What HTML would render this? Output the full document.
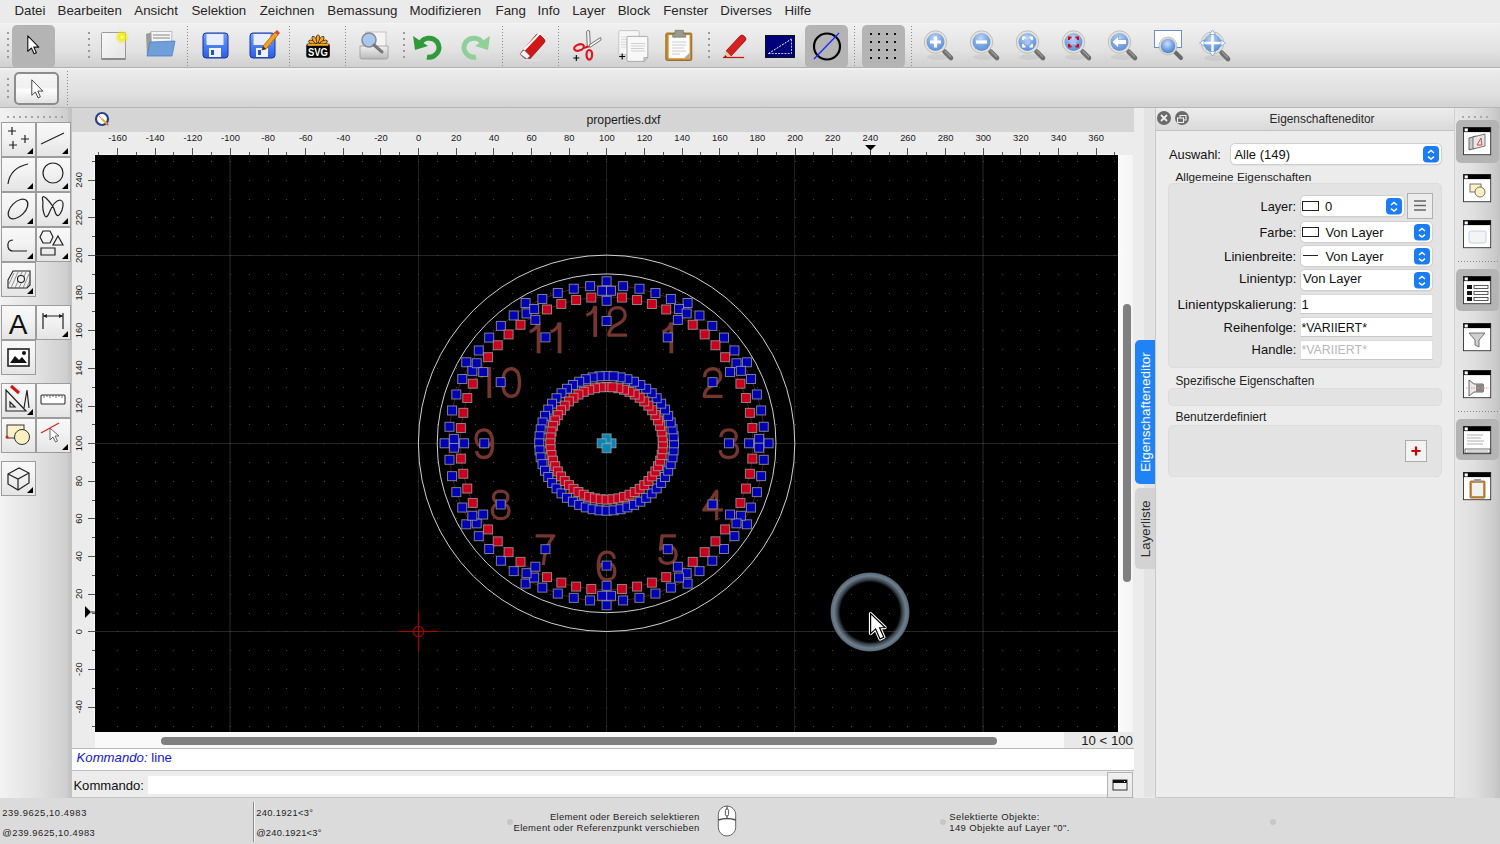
<!DOCTYPE html><html><head><meta charset="utf-8"><style>
*{margin:0;padding:0;box-sizing:border-box}
html,body{width:1500px;height:844px;overflow:hidden;background:#ececec;font-family:"Liberation Sans",sans-serif;color:#222;position:relative}
.a{position:absolute}
.t{position:absolute;white-space:nowrap}
svg{position:absolute;overflow:visible}
text{font-family:"Liberation Sans",sans-serif;white-space:pre}
</style></head><body><div class="a" style="left:0;top:0;width:1500px;height:23px;background:#ebebeb"></div><svg class="a" style="left:0;top:0" width="1500" height="844"><text x="14.40" y="15.00" font-size="13.30" fill="#262626" letter-spacing="0.000" >Datei</text></svg><svg class="a" style="left:0;top:0" width="1500" height="844"><text x="57.60" y="15.00" font-size="13.30" fill="#262626" letter-spacing="0.000" >Bearbeiten</text></svg><svg class="a" style="left:0;top:0" width="1500" height="844"><text x="134.30" y="15.00" font-size="13.30" fill="#262626" letter-spacing="0.000" >Ansicht</text></svg><svg class="a" style="left:0;top:0" width="1500" height="844"><text x="191.50" y="15.00" font-size="13.30" fill="#262626" letter-spacing="0.000" >Selektion</text></svg><svg class="a" style="left:0;top:0" width="1500" height="844"><text x="259.70" y="15.00" font-size="13.30" fill="#262626" letter-spacing="0.000" >Zeichnen</text></svg><svg class="a" style="left:0;top:0" width="1500" height="844"><text x="327.30" y="15.00" font-size="13.30" fill="#262626" letter-spacing="0.000" >Bemassung</text></svg><svg class="a" style="left:0;top:0" width="1500" height="844"><text x="409.40" y="15.00" font-size="13.30" fill="#262626" letter-spacing="0.000" >Modifizieren</text></svg><svg class="a" style="left:0;top:0" width="1500" height="844"><text x="495.60" y="15.00" font-size="13.30" fill="#262626" letter-spacing="0.000" >Fang</text></svg><svg class="a" style="left:0;top:0" width="1500" height="844"><text x="537.60" y="15.00" font-size="13.30" fill="#262626" letter-spacing="0.000" >Info</text></svg><svg class="a" style="left:0;top:0" width="1500" height="844"><text x="572.20" y="15.00" font-size="13.30" fill="#262626" letter-spacing="0.000" >Layer</text></svg><svg class="a" style="left:0;top:0" width="1500" height="844"><text x="617.70" y="15.00" font-size="13.30" fill="#262626" letter-spacing="0.000" >Block</text></svg><svg class="a" style="left:0;top:0" width="1500" height="844"><text x="663.20" y="15.00" font-size="13.30" fill="#262626" letter-spacing="0.000" >Fenster</text></svg><svg class="a" style="left:0;top:0" width="1500" height="844"><text x="720.30" y="15.00" font-size="13.30" fill="#262626" letter-spacing="0.000" >Diverses</text></svg><svg class="a" style="left:0;top:0" width="1500" height="844"><text x="784.50" y="15.00" font-size="13.30" fill="#262626" letter-spacing="0.000" >Hilfe</text></svg><div class="a" style="left:0;top:23px;width:1500px;height:1px;background:#f4f4f4"></div><div class="a" style="left:0;top:24px;width:1500px;height:44px;background:linear-gradient(#f0f0f0,#e2e2e2 60%,#d0d0d0);border-bottom:1px solid #b0b0b0"></div><div class="a" style="left:0;top:68px;width:1500px;height:40px;background:linear-gradient(#f4f4f4,#eaeaea 8%,#dedede 70%,#d2d2d2);border-bottom:1px solid #b6b6b6"></div><svg class="a" style="left:7px;top:32px" width="2" height="30" viewBox="0 0 2 30" ><rect x="0" y="0" width="2" height="2" fill="#9a9a9a"/><rect x="0" y="6" width="2" height="2" fill="#9a9a9a"/><rect x="0" y="12" width="2" height="2" fill="#9a9a9a"/><rect x="0" y="18" width="2" height="2" fill="#9a9a9a"/><rect x="0" y="24" width="2" height="2" fill="#9a9a9a"/></svg><svg class="a" style="left:88px;top:32px" width="2" height="30" viewBox="0 0 2 30" ><rect x="0" y="0" width="2" height="2" fill="#9a9a9a"/><rect x="0" y="6" width="2" height="2" fill="#9a9a9a"/><rect x="0" y="12" width="2" height="2" fill="#9a9a9a"/><rect x="0" y="18" width="2" height="2" fill="#9a9a9a"/><rect x="0" y="24" width="2" height="2" fill="#9a9a9a"/></svg><svg class="a" style="left:403px;top:32px" width="2" height="30" viewBox="0 0 2 30" ><rect x="0" y="0" width="2" height="2" fill="#9a9a9a"/><rect x="0" y="6" width="2" height="2" fill="#9a9a9a"/><rect x="0" y="12" width="2" height="2" fill="#9a9a9a"/><rect x="0" y="18" width="2" height="2" fill="#9a9a9a"/><rect x="0" y="24" width="2" height="2" fill="#9a9a9a"/></svg><svg class="a" style="left:708px;top:32px" width="2" height="30" viewBox="0 0 2 30" ><rect x="0" y="0" width="2" height="2" fill="#9a9a9a"/><rect x="0" y="6" width="2" height="2" fill="#9a9a9a"/><rect x="0" y="12" width="2" height="2" fill="#9a9a9a"/><rect x="0" y="18" width="2" height="2" fill="#9a9a9a"/><rect x="0" y="24" width="2" height="2" fill="#9a9a9a"/></svg><div class="a" style="left:187px;top:26px;width:1px;height:41px;background:repeating-linear-gradient(#8a8a8a 0 1px,transparent 1px 3px)"></div><div class="a" style="left:289px;top:26px;width:1px;height:41px;background:repeating-linear-gradient(#8a8a8a 0 1px,transparent 1px 3px)"></div><div class="a" style="left:345px;top:26px;width:1px;height:41px;background:repeating-linear-gradient(#8a8a8a 0 1px,transparent 1px 3px)"></div><div class="a" style="left:502px;top:26px;width:1px;height:41px;background:repeating-linear-gradient(#8a8a8a 0 1px,transparent 1px 3px)"></div><div class="a" style="left:558px;top:26px;width:1px;height:41px;background:repeating-linear-gradient(#8a8a8a 0 1px,transparent 1px 3px)"></div><div class="a" style="left:854px;top:26px;width:1px;height:41px;background:repeating-linear-gradient(#8a8a8a 0 1px,transparent 1px 3px)"></div><div class="a" style="left:911px;top:26px;width:1px;height:41px;background:repeating-linear-gradient(#8a8a8a 0 1px,transparent 1px 3px)"></div><div class="a" style="left:12px;top:25px;width:43px;height:43px;background:#b4b4b4;border-radius:5px"></div><svg class="a" style="left:27px;top:35px" width="14" height="20" viewBox="0 0 14 20" ><path d="M0 0 L0 15.5 L3.6 12.2 L6.3 18 L8.6 17 L6 11.3 L11 11.3 Z" transform="translate(0.8,0.8)" fill="#fff" stroke="#111" stroke-width="1.1" stroke-linejoin="round"/></svg><svg class="a" style="left:99px;top:29px" width="32" height="34" viewBox="0 0 32 34" >
<defs><radialGradient id="glow"><stop offset="0" stop-color="#fffbe0"/><stop offset="0.35" stop-color="#f4f000"/><stop offset="1" stop-color="#f0e000" stop-opacity="0"/></radialGradient>
<linearGradient id="pg" x1="0" y1="0" x2="1" y2="1"><stop offset="0" stop-color="#f8f8f8"/><stop offset="1" stop-color="#e4e4e4"/></linearGradient></defs>
<rect x="2.5" y="3.5" width="24" height="27" rx="1" fill="url(#pg)" stroke="#9a9a9a"/>
<rect x="2.5" y="29" width="24" height="2" fill="#8a8a8a"/>
<circle cx="23" cy="8" r="7" fill="url(#glow)"/></svg><svg class="a" style="left:143px;top:30px" width="34" height="30" viewBox="0 0 34 30" >
<path d="M3 4 L9 2 L10 25 L4 26 Z" fill="#9a9a9a"/>
<path d="M8 1.5 L29 1.5 L28 22 L9 22 Z" fill="#f6f6f6" stroke="#b0b0b0" stroke-width="0.8"/>
<path d="M10 5 L27 5 M10 8 L27 8" stroke="#aaa" stroke-width="1.5"/>
<path d="M7 12 L32 11 L29 26 L4 26 Z" fill="#6f9fd8" stroke="#4c7fc0" stroke-width="0.8"/></svg><svg class="a" style="left:202px;top:32px" width="27" height="27" viewBox="0 0 27 27" >
<defs><linearGradient id="fl" x1="0" y1="0" x2="0" y2="1"><stop offset="0" stop-color="#6ea0ff"/><stop offset="1" stop-color="#2a5fe0"/></linearGradient></defs>
<rect x="1" y="1" width="25" height="25" rx="3" fill="url(#fl)" stroke="#1a2fa0" stroke-width="1"/>
<rect x="4.5" y="2" width="17" height="11" fill="#e8eefc"/>
<rect x="7" y="16" width="12" height="9" fill="#eef2ff"/>
<rect x="9" y="18" width="3" height="5" fill="#2a4fc0"/></svg><svg class="a" style="left:249px;top:32px" width="27" height="27" viewBox="0 0 27 27" >
<defs><linearGradient id="fl" x1="0" y1="0" x2="0" y2="1"><stop offset="0" stop-color="#6ea0ff"/><stop offset="1" stop-color="#2a5fe0"/></linearGradient></defs>
<rect x="1" y="1" width="25" height="25" rx="3" fill="url(#fl)" stroke="#1a2fa0" stroke-width="1"/>
<rect x="4.5" y="2" width="17" height="11" fill="#e8eefc"/>
<rect x="7" y="16" width="12" height="9" fill="#eef2ff"/>
<rect x="9" y="18" width="3" height="5" fill="#2a4fc0"/></svg><svg class="a" style="left:260px;top:29px" width="20" height="22" viewBox="0 0 20 22" ><path d="M3 17 L15 3 L18 6 L6 20 L2 21 Z" fill="#f4a020" stroke="#b05a00" stroke-width="0.8"/><path d="M15 3 L17 1 L20 4 L18 6 Z" fill="#e04040"/><path d="M2 21 L3 17 L6 20 Z" fill="#333"/></svg><svg class="a" style="left:303px;top:30px" width="31" height="31" viewBox="303 30 31 31"><ellipse cx="318" cy="39" rx="1.9" ry="4.2" transform="rotate(-66 318 45)" fill="#f7a823" stroke="#000" stroke-width="0.6"/><ellipse cx="318" cy="39" rx="1.9" ry="4.2" transform="rotate(-33 318 45)" fill="#f7a823" stroke="#000" stroke-width="0.6"/><ellipse cx="318" cy="39" rx="1.9" ry="4.2" transform="rotate(0 318 45)" fill="#f7a823" stroke="#000" stroke-width="0.6"/><ellipse cx="318" cy="39" rx="1.9" ry="4.2" transform="rotate(33 318 45)" fill="#f7a823" stroke="#000" stroke-width="0.6"/><ellipse cx="318" cy="39" rx="1.9" ry="4.2" transform="rotate(66 318 45)" fill="#f7a823" stroke="#000" stroke-width="0.6"/><rect x="306.3" y="43.6" width="23.5" height="14.2" rx="2.2" fill="#000"/>
<rect x="307.5" y="43.8" width="21" height="2" fill="#f7a823"/>
<text x="318" y="56" font-family="Liberation Sans" font-weight="bold" font-size="11" fill="#fff" text-anchor="middle" transform="translate(318 0) scale(0.86 1) translate(-318 0)">SVG</text></svg><svg class="a" style="left:358px;top:30px" width="32" height="32" viewBox="0 0 32 32" >
<defs><linearGradient id="pr" x1="0" y1="0" x2="0" y2="1"><stop offset="0" stop-color="#f2f2f2"/><stop offset="1" stop-color="#b8b8b8"/></linearGradient></defs>
<rect x="8" y="2" width="20" height="16" fill="#f4f4f4" stroke="#bbb" stroke-width="0.8"/>
<path d="M2 16 L30 16 L30 27 Q30 29 28 29 L4 29 Q2 29 2 27 Z" fill="url(#pr)" stroke="#9a9a9a" stroke-width="0.8"/>
<circle cx="11" cy="10" r="7" fill="#a9c8f0" stroke="#8a8a8a" stroke-width="1.5"/>
<path d="M16 15 L24 22" stroke="#777" stroke-width="3" stroke-linecap="round"/></svg><svg class="a" style="left:413px;top:32px" width="30" height="27" viewBox="0 0 30 27" ><g ><path d="M8 10 A10 9.5 0 1 1 14 25" fill="none" stroke="#2f9a3a" stroke-width="5"/>
<path d="M0 4 L2 18 L15 14 Z" fill="#2f9a3a"/></g></svg><svg class="a" style="left:460px;top:32px" width="30" height="27" viewBox="0 0 30 27" ><g transform="translate(30,0) scale(-1,1)"><path d="M8 10 A10 9.5 0 1 1 14 25" fill="none" stroke="#8fcf9a" stroke-width="5"/>
<path d="M0 4 L2 18 L15 14 Z" fill="#8fcf9a"/></g></svg><svg class="a" style="left:516px;top:30px" width="32" height="32" viewBox="0 0 32 32" ><path d="M4 24 L20 5 Q22 3 24 5 L28 9 Q30 11 28 13 L12 31 Z" fill="#d01818" stroke="#8a1010" stroke-width="0.8"/>
<path d="M8 20 L24 3" stroke="#fff" stroke-width="2"/>
<path d="M4 24 L8 20 L14 26 L11 29 Z" fill="#f4f4f4" stroke="#888" stroke-width="0.8"/>
<ellipse cx="16" cy="30" rx="10" ry="1.3" fill="#ddd"/></svg><svg class="a" style="left:570px;top:28px" width="36" height="36" viewBox="570 28 36 36"><path d="M586.6 31.5 Q588 29.5 589.6 31 L590.3 46 L587.3 47 Z" fill="#f4f4f4" stroke="#555" stroke-width="0.8"/>
<path d="M589 45 L600.5 37.5 Q601.5 39 600.8 40.2 L589.8 47.5 Z" fill="#f4f4f4" stroke="#555" stroke-width="0.8"/>
<ellipse cx="579" cy="47.5" rx="5" ry="3" transform="rotate(-20 579 47.5)" fill="none" stroke="#e0141e" stroke-width="2.2"/>
<ellipse cx="589.3" cy="54.8" rx="2.8" ry="4.8" fill="none" stroke="#e0141e" stroke-width="2.2"/>
<path d="M583.5 48 L588.5 46.5" stroke="#e0141e" stroke-width="2"/>
<path d="M576.3 55 V61 M573.3 58 H579.3" stroke="#000" stroke-width="1.1"/></svg><svg class="a" style="left:614px;top:28px" width="38" height="38" viewBox="614 28 38 38"><rect x="618.8" y="30.6" width="20.4" height="24" rx="1.2" fill="#f6f6f6" stroke="#bdbdbd" stroke-width="0.8"/>
<path d="M621 37 H630 M621 39.5 H630 M621 42 H630 M621 44.5 H630 M621 47 H630" stroke="#d4d4d4" stroke-width="0.8"/>
<path d="M627 37.4 Q627 36.4 628 36.4 L646.8 36.4 Q647.8 36.4 647.8 37.4 L647.8 57.5 L643.8 61.4 L628 61.4 Q627 61.4 627 60.4 Z" fill="#f8f8f8" stroke="#9a9a9a" stroke-width="0.8"/>
<path d="M643.8 61.4 L643.8 57.5 L647.8 57.5 Z" fill="#cfcfcf" stroke="#8a8a8a" stroke-width="0.5"/>
<path d="M631 43.5 H645 M631 46 H645 M631 48.5 H644 M631 51 H645" stroke="#cfcfcf" stroke-width="1"/>
<path d="M622.2 53.5 V59.5 M619.2 56.5 H625.2" stroke="#000" stroke-width="1.1"/></svg><svg class="a" style="left:662px;top:27px" width="34" height="36" viewBox="662 27 34 36"><rect x="665.8" y="33" width="26" height="27.5" rx="1.5" fill="#c6882a" stroke="#8a5a18" stroke-width="0.8"/>
<rect x="668.6" y="35" width="21" height="23.3" fill="#fbfbfb"/>
<path d="M672 42 H686 M672 45 H686 M672 48 H684 M672 51 H686 M672 54 H680" stroke="#c8c8c8" stroke-width="0.9"/>
<path d="M684 58.3 L689.6 52.7 L689.6 58.3 Z" fill="#a8a8a8"/>
<path d="M672.7 37.2 L672.7 33.5 L675 33.5 L675 30.3 L683.4 30.3 L683.4 33.5 L685.7 33.5 L685.7 37.2 Z" fill="#9a9a90" stroke="#6a6a60" stroke-width="0.6"/></svg><svg class="a" style="left:721px;top:33px" width="26" height="26" viewBox="0 0 26 26" ><path d="M5 18 L19 3 Q21 1 23 3 L24 4 Q26 6 24 8 L10 23 Z" fill="#d82020" stroke="#8a1010" stroke-width="0.8"/>
<path d="M5 18 L10 23 L3 25 Z" fill="#e8c898"/><path d="M3 25 L4 22 L6 24 Z" fill="#222"/>
<path d="M2 24.5 L23 24.5" stroke="#e00000" stroke-width="1.2"/></svg><svg class="a" style="left:765px;top:35px" width="30" height="23" viewBox="0 0 30 23" ><rect x="0.5" y="0.5" width="29" height="22" fill="#00007a" stroke="#111"/>
<path d="M3.5 18.5 L26.5 18.5 L26.5 4" fill="none" stroke="#bcc8ff" stroke-width="1" stroke-dasharray="2 1.2"/><path d="M3.5 18.5 L26.5 4" stroke="#fff" stroke-width="1" stroke-dasharray="2 1.2"/></svg><div class="a" style="left:805px;top:25px;width:43px;height:43px;background:#b4b4b4;border-radius:5px"></div><svg class="a" style="left:811px;top:31px" width="32" height="32" viewBox="0 0 32 32" ><circle cx="16" cy="15.5" r="13" fill="none" stroke="#000" stroke-width="2.2"/><path d="M3 28 L28 2" stroke="#1a2aff" stroke-width="1.3"/></svg><div class="a" style="left:862px;top:25px;width:43px;height:43px;background:#b4b4b4;border-radius:5px"></div><svg class="a" style="left:870px;top:33px" width="28" height="28" viewBox="0 0 28 28" ><rect x="0" y="0" width="2" height="2" fill="#111"/><rect x="0" y="8" width="2" height="2" fill="#111"/><rect x="0" y="16" width="2" height="2" fill="#111"/><rect x="0" y="24" width="2" height="2" fill="#111"/><rect x="8" y="0" width="2" height="2" fill="#111"/><rect x="8" y="8" width="2" height="2" fill="#111"/><rect x="8" y="16" width="2" height="2" fill="#111"/><rect x="8" y="24" width="2" height="2" fill="#111"/><rect x="16" y="0" width="2" height="2" fill="#111"/><rect x="16" y="8" width="2" height="2" fill="#111"/><rect x="16" y="16" width="2" height="2" fill="#111"/><rect x="16" y="24" width="2" height="2" fill="#111"/><rect x="24" y="0" width="2" height="2" fill="#111"/><rect x="24" y="8" width="2" height="2" fill="#111"/><rect x="24" y="16" width="2" height="2" fill="#111"/><rect x="24" y="24" width="2" height="2" fill="#111"/></svg><svg class="a" style="left:923px;top:30px" width="34" height="34" viewBox="0 0 34 34" ><defs><radialGradient id="mg923" cx="0.45" cy="0.3" r="0.75"><stop offset="0" stop-color="#c4d8f6"/><stop offset="0.55" stop-color="#7aa6e2"/><stop offset="1" stop-color="#5a8cd4"/></radialGradient></defs>
<ellipse cx="15" cy="27" rx="11" ry="3" fill="#000" opacity="0.06"/>
<path d="M21.5 21.5 L28 28" stroke="#6e6e6e" stroke-width="4.6" stroke-linecap="round"/><path d="M22 21 L27.5 26.5" stroke="#9a9a9a" stroke-width="1.2" stroke-linecap="round"/>
<circle cx="12.5" cy="12" r="11.2" fill="#e4e4dc" stroke="#b4b4aa" stroke-width="0.8"/>
<circle cx="12.5" cy="12" r="9" fill="url(#mg923)"/><path d="M12.5 6.5 L12.5 17.5 M7 12 L18 12" stroke="#fff" stroke-width="3.2"/></svg><svg class="a" style="left:969px;top:30px" width="34" height="34" viewBox="0 0 34 34" ><defs><radialGradient id="mg969" cx="0.45" cy="0.3" r="0.75"><stop offset="0" stop-color="#c4d8f6"/><stop offset="0.55" stop-color="#7aa6e2"/><stop offset="1" stop-color="#5a8cd4"/></radialGradient></defs>
<ellipse cx="15" cy="27" rx="11" ry="3" fill="#000" opacity="0.06"/>
<path d="M21.5 21.5 L28 28" stroke="#6e6e6e" stroke-width="4.6" stroke-linecap="round"/><path d="M22 21 L27.5 26.5" stroke="#9a9a9a" stroke-width="1.2" stroke-linecap="round"/>
<circle cx="12.5" cy="12" r="11.2" fill="#e4e4dc" stroke="#b4b4aa" stroke-width="0.8"/>
<circle cx="12.5" cy="12" r="9" fill="url(#mg969)"/><path d="M7 12 L18 12" stroke="#fff" stroke-width="3.2"/></svg><svg class="a" style="left:1015px;top:30px" width="34" height="34" viewBox="0 0 34 34" ><defs><radialGradient id="mg1015" cx="0.45" cy="0.3" r="0.75"><stop offset="0" stop-color="#c4d8f6"/><stop offset="0.55" stop-color="#7aa6e2"/><stop offset="1" stop-color="#5a8cd4"/></radialGradient></defs>
<ellipse cx="15" cy="27" rx="11" ry="3" fill="#000" opacity="0.06"/>
<path d="M21.5 21.5 L28 28" stroke="#6e6e6e" stroke-width="4.6" stroke-linecap="round"/><path d="M22 21 L27.5 26.5" stroke="#9a9a9a" stroke-width="1.2" stroke-linecap="round"/>
<circle cx="12.5" cy="12" r="11.2" fill="#e4e4dc" stroke="#b4b4aa" stroke-width="0.8"/>
<circle cx="12.5" cy="12" r="9" fill="url(#mg1015)"/><path d="M8 10 L8 7.5 L10.5 7.5 M14.5 7.5 L17 7.5 L17 10 M17 14 L17 16.5 L14.5 16.5 M10.5 16.5 L8 16.5 L8 14" fill="none" stroke="#fff" stroke-width="1.8"/><rect x="10" y="9.5" width="5" height="5" fill="#a8c4ee"/></svg><svg class="a" style="left:1061px;top:30px" width="34" height="34" viewBox="0 0 34 34" ><defs><radialGradient id="mg1061" cx="0.45" cy="0.3" r="0.75"><stop offset="0" stop-color="#c4d8f6"/><stop offset="0.55" stop-color="#7aa6e2"/><stop offset="1" stop-color="#5a8cd4"/></radialGradient></defs>
<ellipse cx="15" cy="27" rx="11" ry="3" fill="#000" opacity="0.06"/>
<path d="M21.5 21.5 L28 28" stroke="#6e6e6e" stroke-width="4.6" stroke-linecap="round"/><path d="M22 21 L27.5 26.5" stroke="#9a9a9a" stroke-width="1.2" stroke-linecap="round"/>
<circle cx="12.5" cy="12" r="11.2" fill="#e4e4dc" stroke="#b4b4aa" stroke-width="0.8"/>
<circle cx="12.5" cy="12" r="9" fill="url(#mg1061)"/><path d="M8 10 L8 7.5 L10.5 7.5 M14.5 7.5 L17 7.5 L17 10 M17 14 L17 16.5 L14.5 16.5 M10.5 16.5 L8 16.5 L8 14" fill="none" stroke="#e00010" stroke-width="2"/><rect x="10" y="9.5" width="5" height="5" fill="#a8c4ee"/></svg><svg class="a" style="left:1107px;top:30px" width="34" height="34" viewBox="0 0 34 34" ><defs><radialGradient id="mg1107" cx="0.45" cy="0.3" r="0.75"><stop offset="0" stop-color="#c4d8f6"/><stop offset="0.55" stop-color="#7aa6e2"/><stop offset="1" stop-color="#5a8cd4"/></radialGradient></defs>
<ellipse cx="15" cy="27" rx="11" ry="3" fill="#000" opacity="0.06"/>
<path d="M21.5 21.5 L28 28" stroke="#6e6e6e" stroke-width="4.6" stroke-linecap="round"/><path d="M22 21 L27.5 26.5" stroke="#9a9a9a" stroke-width="1.2" stroke-linecap="round"/>
<circle cx="12.5" cy="12" r="11.2" fill="#e4e4dc" stroke="#b4b4aa" stroke-width="0.8"/>
<circle cx="12.5" cy="12" r="9" fill="url(#mg1107)"/><path d="M5 12 L11.5 6 L11.5 9.5 L19.5 9.5 L19.5 14.5 L11.5 14.5 L11.5 18 Z" fill="#fff" stroke="#4a7ac8" stroke-width="0.5"/></svg><svg class="a" style="left:1153px;top:30px" width="32" height="32" viewBox="0 0 32 32" ><defs><radialGradient id="mgw" cx="0.45" cy="0.35" r="0.7"><stop offset="0" stop-color="#cfe0fb"/><stop offset="0.6" stop-color="#6f9ee0"/><stop offset="1" stop-color="#4a7cc8"/></radialGradient></defs>
<rect x="1.5" y="0.5" width="27" height="17" fill="#fff" stroke="#6a8fd0"/>
<path d="M22 22 L28 28" stroke="#6a6a6a" stroke-width="4" stroke-linecap="round"/>
<circle cx="15" cy="16" r="9" fill="#dcdcd4" stroke="#b8b8b0" stroke-width="0.8"/><circle cx="15" cy="16" r="7.3" fill="url(#mgw)"/></svg><svg class="a" style="left:1200px;top:31px" width="34" height="34" viewBox="0 0 34 34" ><defs><radialGradient id="mg1200" cx="0.45" cy="0.3" r="0.75"><stop offset="0" stop-color="#c4d8f6"/><stop offset="0.55" stop-color="#7aa6e2"/><stop offset="1" stop-color="#5a8cd4"/></radialGradient></defs>
<ellipse cx="15" cy="27" rx="11" ry="3" fill="#000" opacity="0.06"/>
<path d="M21.5 21.5 L28 28" stroke="#6e6e6e" stroke-width="4.6" stroke-linecap="round"/><path d="M22 21 L27.5 26.5" stroke="#9a9a9a" stroke-width="1.2" stroke-linecap="round"/>
<circle cx="12.5" cy="12" r="11.2" fill="#e4e4dc" stroke="#b4b4aa" stroke-width="0.8"/>
<circle cx="12.5" cy="12" r="9" fill="url(#mg1200)"/><path d="M12.5 0 L12.5 24 M0.5 12 L24.5 12" stroke="#fff" stroke-width="2.4"/><path d="M12.5 -1 L9.5 3.5 L15.5 3.5 Z M12.5 25 L9.5 20.5 L15.5 20.5 Z M-0.5 12 L4 9 L4 15 Z M25.5 12 L21 9 L21 15 Z" fill="#fff" stroke="#5a8ad8" stroke-width="0.6"/></svg><svg class="a" style="left:7px;top:78px" width="2" height="24" viewBox="0 0 2 24" ><rect x="0" y="0" width="2" height="2" fill="#9a9a9a"/><rect x="0" y="6" width="2" height="2" fill="#9a9a9a"/><rect x="0" y="12" width="2" height="2" fill="#9a9a9a"/><rect x="0" y="18" width="2" height="2" fill="#9a9a9a"/></svg><div class="a" style="left:67px;top:71px;width:1px;height:35px;background:repeating-linear-gradient(#8a8a8a 0 1px,transparent 1px 3px)"></div><div class="a" style="left:14px;top:72px;width:45px;height:33px;border:2px solid #8c8c8c;border-radius:5px;background:linear-gradient(#f6f6f6 0%,#f0f0f0 45%,#fdfdfd 55%,#e2e2e2 100%)"></div><svg class="a" style="left:31px;top:79px" width="14" height="20" viewBox="0 0 14 20" ><path d="M0 0 L0 15.5 L3.6 12.2 L6.3 18 L8.6 17 L6 11.3 L11 11.3 Z" transform="translate(0.8,0.8)" fill="#fff" stroke="#333" stroke-width="0.9" stroke-linejoin="round"/></svg><div class="a" style="left:0;top:108px;width:72px;height:690px;background:linear-gradient(90deg,#f2f2f2 0%,#e2e2e2 50%,#cfcfcf 92%,#bdbdbd 100%)"></div><div class="a" style="left:70px;top:108px;width:2px;height:690px;background:#c2c2c2"></div><svg class="a" style="left:7px;top:116px" width="60" height="2" viewBox="0 0 60 2" ><rect x="0" y="0" width="2" height="2" fill="#a4a4a4"/><rect x="6" y="0" width="2" height="2" fill="#a4a4a4"/><rect x="12" y="0" width="2" height="2" fill="#a4a4a4"/><rect x="18" y="0" width="2" height="2" fill="#a4a4a4"/><rect x="24" y="0" width="2" height="2" fill="#a4a4a4"/><rect x="30" y="0" width="2" height="2" fill="#a4a4a4"/><rect x="36" y="0" width="2" height="2" fill="#a4a4a4"/><rect x="42" y="0" width="2" height="2" fill="#a4a4a4"/><rect x="48" y="0" width="2" height="2" fill="#a4a4a4"/><rect x="54" y="0" width="2" height="2" fill="#a4a4a4"/></svg><div class="a" style="left:1px;top:122px;width:35px;height:35px;border:1px solid #9c9c9c;background:linear-gradient(#f8f8f8,#f2f2f2 45%,#e4e4e4)"></div><svg class="a" style="left:1px;top:122px" width="35" height="35" viewBox="0 0 35 35" ><path d="M11 5 L11 13 M7 9 L15 9 M24 13 L24 21 M20 17 L28 17 M12 19 L12 27 M8 23 L16 23" stroke="#222" fill="none" stroke-width="1.2"/><path d="M32 26 L32 32 L26 32 Z" fill="#000"/></svg><div class="a" style="left:36px;top:122px;width:35px;height:35px;border:1px solid #9c9c9c;background:linear-gradient(#f8f8f8,#f2f2f2 45%,#e4e4e4)"></div><svg class="a" style="left:36px;top:122px" width="35" height="35" viewBox="0 0 35 35" ><path d="M5 22 L28 11" stroke="#222" fill="none" stroke-width="1.2"/><path d="M32 26 L32 32 L26 32 Z" fill="#000"/></svg><div class="a" style="left:1px;top:157px;width:35px;height:35px;border:1px solid #9c9c9c;background:linear-gradient(#f8f8f8,#f2f2f2 45%,#e4e4e4)"></div><svg class="a" style="left:1px;top:157px" width="35" height="35" viewBox="0 0 35 35" ><path d="M7 27 Q9 11 27 7" stroke="#222" fill="none" stroke-width="1.2"/><path d="M32 26 L32 32 L26 32 Z" fill="#000"/></svg><div class="a" style="left:36px;top:157px;width:35px;height:35px;border:1px solid #9c9c9c;background:linear-gradient(#f8f8f8,#f2f2f2 45%,#e4e4e4)"></div><svg class="a" style="left:36px;top:157px" width="35" height="35" viewBox="0 0 35 35" ><circle cx="17" cy="16" r="10" stroke="#222" fill="none" stroke-width="1.2"/><path d="M32 26 L32 32 L26 32 Z" fill="#000"/></svg><div class="a" style="left:1px;top:192px;width:35px;height:35px;border:1px solid #9c9c9c;background:linear-gradient(#f8f8f8,#f2f2f2 45%,#e4e4e4)"></div><svg class="a" style="left:1px;top:192px" width="35" height="35" viewBox="0 0 35 35" ><ellipse cx="17" cy="17" rx="12" ry="7" transform="rotate(-45 17 17)" stroke="#222" fill="none" stroke-width="1.2"/><path d="M32 26 L32 32 L26 32 Z" fill="#000"/></svg><div class="a" style="left:36px;top:192px;width:35px;height:35px;border:1px solid #9c9c9c;background:linear-gradient(#f8f8f8,#f2f2f2 45%,#e4e4e4)"></div><svg class="a" style="left:36px;top:192px" width="35" height="35" viewBox="0 0 35 35" ><path d="M7 10 Q5 2 10 6 Q18 14 19 20 Q22 28 26 18 Q29 9 24 8 Q18 9 14 19 Q11 27 9 24 Q6 18 7 10" stroke="#222" fill="none" stroke-width="1.2"/><path d="M32 26 L32 32 L26 32 Z" fill="#000"/></svg><div class="a" style="left:1px;top:227px;width:35px;height:35px;border:1px solid #9c9c9c;background:linear-gradient(#f8f8f8,#f2f2f2 45%,#e4e4e4)"></div><svg class="a" style="left:1px;top:227px" width="35" height="35" viewBox="0 0 35 35" ><path d="M12 13 Q6 13 7 20 Q8 24 12 24 L26 24" stroke="#222" fill="none" stroke-width="1.2"/><path d="M32 26 L32 32 L26 32 Z" fill="#000"/></svg><div class="a" style="left:36px;top:227px;width:35px;height:35px;border:1px solid #9c9c9c;background:linear-gradient(#f8f8f8,#f2f2f2 45%,#e4e4e4)"></div><svg class="a" style="left:36px;top:227px" width="35" height="35" viewBox="0 0 35 35" ><path d="M7 4 L14 4 L17 10 L14 16 L7 16 L4 10 Z M22 9 L27 18 L17 18 Z M5 21 L19 21 L19 28 L5 28 Z" stroke="#222" fill="none" stroke-width="1.2"/><path d="M32 26 L32 32 L26 32 Z" fill="#000"/></svg><div class="a" style="left:1px;top:262px;width:35px;height:35px;border:1px solid #9c9c9c;background:linear-gradient(#f8f8f8,#f2f2f2 45%,#e4e4e4)"></div><svg class="a" style="left:1px;top:262px" width="35" height="35" viewBox="0 0 35 35" ><path d="M7 18 L12 9 L29 9 L29 23 L26 26 L7 26 Z" fill="#f0f0f0" stroke="#222" stroke-width="1.1"/><g stroke="#555" stroke-width="0.6"><path d="M8 22 L13 11 M10 26 L17 10 M14 26 L21 10 M18 26 L25 10 M22 26 L28 12 M26 25 L29 18"/></g><circle cx="20" cy="17" r="3.5" fill="#f0f0f0" stroke="#222" stroke-width="1.1"/><path d="M32 26 L32 32 L26 32 Z" fill="#000"/></svg><div class="a" style="left:1px;top:305px;width:35px;height:35px;border:1px solid #9c9c9c;background:linear-gradient(#f8f8f8,#f2f2f2 45%,#e4e4e4)"></div><svg class="a" style="left:1px;top:305px" width="35" height="35" viewBox="0 0 35 35" ><text x="17" y="29" font-family="Liberation Serif" font-size="28" text-anchor="middle" fill="#111">A</text></svg><div class="a" style="left:36px;top:305px;width:35px;height:35px;border:1px solid #9c9c9c;background:linear-gradient(#f8f8f8,#f2f2f2 45%,#e4e4e4)"></div><svg class="a" style="left:36px;top:305px" width="35" height="35" viewBox="0 0 35 35" ><path d="M7 8 L7 24 M27 8 L27 24 M7 11 L27 11" stroke="#222" fill="none" stroke-width="1.2"/><path d="M7 11 L11 9 L11 13 Z M27 11 L23 9 L23 13 Z" fill="#222"/><path d="M32 26 L32 32 L26 32 Z" fill="#000"/></svg><div class="a" style="left:1px;top:340px;width:35px;height:35px;border:1px solid #9c9c9c;background:linear-gradient(#f8f8f8,#f2f2f2 45%,#e4e4e4)"></div><svg class="a" style="left:1px;top:340px" width="35" height="35" viewBox="0 0 35 35" ><rect x="7" y="9" width="21" height="17" fill="#fff" stroke="#222" stroke-width="1.6"/><path d="M9 23 L14 16 L18 20 L21 17 L26 23 Z" fill="#111"/><circle cx="23" cy="13" r="2" fill="#111"/></svg><div class="a" style="left:1px;top:383px;width:35px;height:35px;border:1px solid #9c9c9c;background:linear-gradient(#f8f8f8,#f2f2f2 45%,#e4e4e4)"></div><svg class="a" style="left:1px;top:383px" width="35" height="35" viewBox="0 0 35 35" ><path d="M5 7 L5 28 L25 28 Z M9 19 L9 24 L14 24 Z" stroke="#222" fill="none" stroke-width="1.2"/><path d="M10 3 L18 10" stroke="#d01818" stroke-width="3"/><path d="M26 7 L23 25 M26 7 L28 25" stroke="#222" fill="none" stroke-width="1.2"/><path d="M32 26 L32 32 L26 32 Z" fill="#000"/></svg><div class="a" style="left:36px;top:383px;width:35px;height:35px;border:1px solid #9c9c9c;background:linear-gradient(#f8f8f8,#f2f2f2 45%,#e4e4e4)"></div><svg class="a" style="left:36px;top:383px" width="35" height="35" viewBox="0 0 35 35" ><rect x="5" y="12" width="24" height="9" rx="1" fill="#fff" stroke="#333" stroke-width="1.1"/><path d="M8 12 L8 15 M11 12 L11 14 M14 12 L14 15 M17 12 L17 14 M20 12 L20 15 M23 12 L23 14 M26 12 L26 15" stroke="#333" stroke-width="0.7"/></svg><div class="a" style="left:1px;top:418px;width:35px;height:35px;border:1px solid #9c9c9c;background:linear-gradient(#f8f8f8,#f2f2f2 45%,#e4e4e4)"></div><svg class="a" style="left:1px;top:418px" width="35" height="35" viewBox="0 0 35 35" ><rect x="6" y="7" width="17" height="13" fill="#fdf3c8" stroke="#333" stroke-width="1"/><circle cx="21" cy="19" r="7.5" fill="#fdf0c0" stroke="#333" stroke-width="1"/><circle cx="6" cy="19" r="1.5" fill="#e02020"/></svg><div class="a" style="left:36px;top:418px;width:35px;height:35px;border:1px solid #9c9c9c;background:linear-gradient(#f8f8f8,#f2f2f2 45%,#e4e4e4)"></div><svg class="a" style="left:36px;top:418px" width="35" height="35" viewBox="0 0 35 35" ><path d="M5 15 L23 5" stroke="#e82020" stroke-width="1.3"/><path d="M14 10 L14 22 L17 19 L19.5 24 L21.5 23 L19 18 L23 18 Z" fill="#fff" stroke="#555" stroke-width="0.9"/><path d="M32 26 L32 32 L26 32 Z" fill="#000"/></svg><div class="a" style="left:1px;top:461px;width:35px;height:35px;border:1px solid #9c9c9c;background:linear-gradient(#f8f8f8,#f2f2f2 45%,#e4e4e4)"></div><svg class="a" style="left:1px;top:461px" width="35" height="35" viewBox="0 0 35 35" ><path d="M7 13 L18 7 L28 12 L28 22 L17 29 L7 23 Z M7 13 L17 18 L28 12 M17 18 L17 29" stroke="#222" fill="none" stroke-width="1.2"/><path d="M32 26 L32 32 L26 32 Z" fill="#000"/></svg><div class="a" style="left:72px;top:108px;width:1062px;height:24px;background:#d5d5d5"></div><svg class="a" style="left:94px;top:111px" width="16" height="16" viewBox="0 0 16 16" ><circle cx="8" cy="8" r="6" fill="#fff" stroke="#2a3f8a" stroke-width="2.2"/><path d="M5 5 L8.5 9" stroke="#d44" stroke-width="0.8"/><path d="M8 8 L13 13" stroke="#e8b020" stroke-width="2"/><circle cx="13.5" cy="13.5" r="1" fill="#d44"/></svg><svg class="a" style="left:0;top:0" width="1500" height="844"><text x="586.50" y="123.60" font-size="12.30" fill="#1e1e1e" letter-spacing="-0.041" >properties.dxf</text></svg><div class="a" style="left:72px;top:132px;width:1062px;height:23px;background:#ececec"></div><div class="a" style="left:72px;top:132px;width:23px;height:616px;background:#ececec"></div><div class="a" style="left:94px;top:154px;width:1024px;height:1px;background:#f8f8f8"></div><div class="a" style="left:94px;top:154px;width:1px;height:578px;background:#f8f8f8"></div><svg class="a" style="left:0px;top:0px" width="1500" height="844" viewBox="0 0 1500 844" style="left:0;top:0;pointer-events:none"><rect x="98" y="152" width="1" height="3" fill="#555"/><rect x="117" y="148" width="1" height="7" fill="#555"/><rect x="136" y="152" width="1" height="3" fill="#555"/><rect x="155" y="148" width="1" height="7" fill="#555"/><rect x="173" y="152" width="1" height="3" fill="#555"/><rect x="192" y="148" width="1" height="7" fill="#555"/><rect x="211" y="152" width="1" height="3" fill="#555"/><rect x="230" y="148" width="1" height="7" fill="#555"/><rect x="249" y="152" width="1" height="3" fill="#555"/><rect x="268" y="148" width="1" height="7" fill="#555"/><rect x="286" y="152" width="1" height="3" fill="#555"/><rect x="305" y="148" width="1" height="7" fill="#555"/><rect x="324" y="152" width="1" height="3" fill="#555"/><rect x="343" y="148" width="1" height="7" fill="#555"/><rect x="362" y="152" width="1" height="3" fill="#555"/><rect x="380" y="148" width="1" height="7" fill="#555"/><rect x="399" y="152" width="1" height="3" fill="#555"/><rect x="418" y="148" width="1" height="7" fill="#555"/><rect x="437" y="152" width="1" height="3" fill="#555"/><rect x="456" y="148" width="1" height="7" fill="#555"/><rect x="475" y="152" width="1" height="3" fill="#555"/><rect x="493" y="148" width="1" height="7" fill="#555"/><rect x="512" y="152" width="1" height="3" fill="#555"/><rect x="531" y="148" width="1" height="7" fill="#555"/><rect x="550" y="152" width="1" height="3" fill="#555"/><rect x="569" y="148" width="1" height="7" fill="#555"/><rect x="587" y="152" width="1" height="3" fill="#555"/><rect x="606" y="148" width="1" height="7" fill="#555"/><rect x="625" y="152" width="1" height="3" fill="#555"/><rect x="644" y="148" width="1" height="7" fill="#555"/><rect x="663" y="152" width="1" height="3" fill="#555"/><rect x="682" y="148" width="1" height="7" fill="#555"/><rect x="700" y="152" width="1" height="3" fill="#555"/><rect x="719" y="148" width="1" height="7" fill="#555"/><rect x="738" y="152" width="1" height="3" fill="#555"/><rect x="757" y="148" width="1" height="7" fill="#555"/><rect x="776" y="152" width="1" height="3" fill="#555"/><rect x="795" y="148" width="1" height="7" fill="#555"/><rect x="813" y="152" width="1" height="3" fill="#555"/><rect x="832" y="148" width="1" height="7" fill="#555"/><rect x="851" y="152" width="1" height="3" fill="#555"/><rect x="870" y="148" width="1" height="7" fill="#555"/><rect x="889" y="152" width="1" height="3" fill="#555"/><rect x="907" y="148" width="1" height="7" fill="#555"/><rect x="926" y="152" width="1" height="3" fill="#555"/><rect x="945" y="148" width="1" height="7" fill="#555"/><rect x="964" y="152" width="1" height="3" fill="#555"/><rect x="983" y="148" width="1" height="7" fill="#555"/><rect x="1002" y="152" width="1" height="3" fill="#555"/><rect x="1020" y="148" width="1" height="7" fill="#555"/><rect x="1039" y="152" width="1" height="3" fill="#555"/><rect x="1058" y="148" width="1" height="7" fill="#555"/><rect x="1077" y="152" width="1" height="3" fill="#555"/><rect x="1096" y="148" width="1" height="7" fill="#555"/><rect x="1114" y="152" width="1" height="3" fill="#555"/><rect x="92" y="726" width="3" height="1" fill="#555"/><rect x="88" y="707" width="7" height="1" fill="#555"/><rect x="92" y="688" width="3" height="1" fill="#555"/><rect x="88" y="669" width="7" height="1" fill="#555"/><rect x="92" y="650" width="3" height="1" fill="#555"/><rect x="88" y="631" width="7" height="1" fill="#555"/><rect x="92" y="613" width="3" height="1" fill="#555"/><rect x="88" y="594" width="7" height="1" fill="#555"/><rect x="92" y="575" width="3" height="1" fill="#555"/><rect x="88" y="556" width="7" height="1" fill="#555"/><rect x="92" y="537" width="3" height="1" fill="#555"/><rect x="88" y="518" width="7" height="1" fill="#555"/><rect x="92" y="500" width="3" height="1" fill="#555"/><rect x="88" y="481" width="7" height="1" fill="#555"/><rect x="92" y="462" width="3" height="1" fill="#555"/><rect x="88" y="443" width="7" height="1" fill="#555"/><rect x="92" y="424" width="3" height="1" fill="#555"/><rect x="88" y="406" width="7" height="1" fill="#555"/><rect x="92" y="387" width="3" height="1" fill="#555"/><rect x="88" y="368" width="7" height="1" fill="#555"/><rect x="92" y="349" width="3" height="1" fill="#555"/><rect x="88" y="330" width="7" height="1" fill="#555"/><rect x="92" y="311" width="3" height="1" fill="#555"/><rect x="88" y="293" width="7" height="1" fill="#555"/><rect x="92" y="274" width="3" height="1" fill="#555"/><rect x="88" y="255" width="7" height="1" fill="#555"/><rect x="92" y="236" width="3" height="1" fill="#555"/><rect x="88" y="217" width="7" height="1" fill="#555"/><rect x="92" y="199" width="3" height="1" fill="#555"/><rect x="88" y="180" width="7" height="1" fill="#555"/><rect x="92" y="161" width="3" height="1" fill="#555"/></svg><svg class="a" style="left:0;top:0" width="1500" height="844"><text x="108.18" y="141.00" font-size="9.40" fill="#1a1a1a" letter-spacing="0.000" >-160</text></svg><svg class="a" style="left:0;top:0" width="1500" height="844"><text x="145.82" y="141.00" font-size="9.40" fill="#1a1a1a" letter-spacing="0.000" >-140</text></svg><svg class="a" style="left:0;top:0" width="1500" height="844"><text x="183.46" y="141.00" font-size="9.40" fill="#1a1a1a" letter-spacing="0.000" >-120</text></svg><svg class="a" style="left:0;top:0" width="1500" height="844"><text x="221.10" y="141.00" font-size="9.40" fill="#1a1a1a" letter-spacing="0.000" >-100</text></svg><svg class="a" style="left:0;top:0" width="1500" height="844"><text x="261.32" y="141.00" font-size="9.40" fill="#1a1a1a" letter-spacing="0.000" >-80</text></svg><svg class="a" style="left:0;top:0" width="1500" height="844"><text x="298.97" y="141.00" font-size="9.40" fill="#1a1a1a" letter-spacing="0.000" >-60</text></svg><svg class="a" style="left:0;top:0" width="1500" height="844"><text x="336.61" y="141.00" font-size="9.40" fill="#1a1a1a" letter-spacing="0.000" >-40</text></svg><svg class="a" style="left:0;top:0" width="1500" height="844"><text x="374.25" y="141.00" font-size="9.40" fill="#1a1a1a" letter-spacing="0.000" >-20</text></svg><svg class="a" style="left:0;top:0" width="1500" height="844"><text x="416.07" y="141.00" font-size="9.40" fill="#1a1a1a" letter-spacing="0.000" >0</text></svg><svg class="a" style="left:0;top:0" width="1500" height="844"><text x="451.12" y="141.00" font-size="9.40" fill="#1a1a1a" letter-spacing="0.000" >20</text></svg><svg class="a" style="left:0;top:0" width="1500" height="844"><text x="488.76" y="141.00" font-size="9.40" fill="#1a1a1a" letter-spacing="0.000" >40</text></svg><svg class="a" style="left:0;top:0" width="1500" height="844"><text x="526.40" y="141.00" font-size="9.40" fill="#1a1a1a" letter-spacing="0.000" >60</text></svg><svg class="a" style="left:0;top:0" width="1500" height="844"><text x="564.04" y="141.00" font-size="9.40" fill="#1a1a1a" letter-spacing="0.000" >80</text></svg><svg class="a" style="left:0;top:0" width="1500" height="844"><text x="599.05" y="141.00" font-size="9.40" fill="#1a1a1a" letter-spacing="0.000" >100</text></svg><svg class="a" style="left:0;top:0" width="1500" height="844"><text x="636.69" y="141.00" font-size="9.40" fill="#1a1a1a" letter-spacing="0.000" >120</text></svg><svg class="a" style="left:0;top:0" width="1500" height="844"><text x="674.33" y="141.00" font-size="9.40" fill="#1a1a1a" letter-spacing="0.000" >140</text></svg><svg class="a" style="left:0;top:0" width="1500" height="844"><text x="711.97" y="141.00" font-size="9.40" fill="#1a1a1a" letter-spacing="0.000" >160</text></svg><svg class="a" style="left:0;top:0" width="1500" height="844"><text x="749.61" y="141.00" font-size="9.40" fill="#1a1a1a" letter-spacing="0.000" >180</text></svg><svg class="a" style="left:0;top:0" width="1500" height="844"><text x="787.25" y="141.00" font-size="9.40" fill="#1a1a1a" letter-spacing="0.000" >200</text></svg><svg class="a" style="left:0;top:0" width="1500" height="844"><text x="824.89" y="141.00" font-size="9.40" fill="#1a1a1a" letter-spacing="0.000" >220</text></svg><svg class="a" style="left:0;top:0" width="1500" height="844"><text x="862.53" y="141.00" font-size="9.40" fill="#1a1a1a" letter-spacing="0.000" >240</text></svg><svg class="a" style="left:0;top:0" width="1500" height="844"><text x="900.17" y="141.00" font-size="9.40" fill="#1a1a1a" letter-spacing="0.000" >260</text></svg><svg class="a" style="left:0;top:0" width="1500" height="844"><text x="937.81" y="141.00" font-size="9.40" fill="#1a1a1a" letter-spacing="0.000" >280</text></svg><svg class="a" style="left:0;top:0" width="1500" height="844"><text x="975.45" y="141.00" font-size="9.40" fill="#1a1a1a" letter-spacing="0.000" >300</text></svg><svg class="a" style="left:0;top:0" width="1500" height="844"><text x="1013.09" y="141.00" font-size="9.40" fill="#1a1a1a" letter-spacing="0.000" >320</text></svg><svg class="a" style="left:0;top:0" width="1500" height="844"><text x="1050.73" y="141.00" font-size="9.40" fill="#1a1a1a" letter-spacing="0.000" >340</text></svg><svg class="a" style="left:0;top:0" width="1500" height="844"><text x="1088.37" y="141.00" font-size="9.40" fill="#1a1a1a" letter-spacing="0.000" >360</text></svg><svg class="a" style="left:0;top:0" width="1500" height="844"><text transform="translate(81.6,706.78) rotate(-90)" x="-6.82" y="0" font-size="9.4" fill="#1a1a1a">-40</text></svg><svg class="a" style="left:0;top:0" width="1500" height="844"><text transform="translate(81.6,669.14) rotate(-90)" x="-6.82" y="0" font-size="9.4" fill="#1a1a1a">-20</text></svg><svg class="a" style="left:0;top:0" width="1500" height="844"><text transform="translate(81.6,631.50) rotate(-90)" x="-2.63" y="0" font-size="9.4" fill="#1a1a1a">0</text></svg><svg class="a" style="left:0;top:0" width="1500" height="844"><text transform="translate(81.6,593.86) rotate(-90)" x="-5.22" y="0" font-size="9.4" fill="#1a1a1a">20</text></svg><svg class="a" style="left:0;top:0" width="1500" height="844"><text transform="translate(81.6,556.22) rotate(-90)" x="-5.22" y="0" font-size="9.4" fill="#1a1a1a">40</text></svg><svg class="a" style="left:0;top:0" width="1500" height="844"><text transform="translate(81.6,518.58) rotate(-90)" x="-5.22" y="0" font-size="9.4" fill="#1a1a1a">60</text></svg><svg class="a" style="left:0;top:0" width="1500" height="844"><text transform="translate(81.6,480.94) rotate(-90)" x="-5.22" y="0" font-size="9.4" fill="#1a1a1a">80</text></svg><svg class="a" style="left:0;top:0" width="1500" height="844"><text transform="translate(81.6,443.30) rotate(-90)" x="-7.85" y="0" font-size="9.4" fill="#1a1a1a">100</text></svg><svg class="a" style="left:0;top:0" width="1500" height="844"><text transform="translate(81.6,405.66) rotate(-90)" x="-7.85" y="0" font-size="9.4" fill="#1a1a1a">120</text></svg><svg class="a" style="left:0;top:0" width="1500" height="844"><text transform="translate(81.6,368.02) rotate(-90)" x="-7.85" y="0" font-size="9.4" fill="#1a1a1a">140</text></svg><svg class="a" style="left:0;top:0" width="1500" height="844"><text transform="translate(81.6,330.38) rotate(-90)" x="-7.85" y="0" font-size="9.4" fill="#1a1a1a">160</text></svg><svg class="a" style="left:0;top:0" width="1500" height="844"><text transform="translate(81.6,292.74) rotate(-90)" x="-7.85" y="0" font-size="9.4" fill="#1a1a1a">180</text></svg><svg class="a" style="left:0;top:0" width="1500" height="844"><text transform="translate(81.6,255.10) rotate(-90)" x="-7.85" y="0" font-size="9.4" fill="#1a1a1a">200</text></svg><svg class="a" style="left:0;top:0" width="1500" height="844"><text transform="translate(81.6,217.46) rotate(-90)" x="-7.85" y="0" font-size="9.4" fill="#1a1a1a">220</text></svg><svg class="a" style="left:0;top:0" width="1500" height="844"><text transform="translate(81.6,179.82) rotate(-90)" x="-7.85" y="0" font-size="9.4" fill="#1a1a1a">240</text></svg><svg class="a" style="left:864px;top:144px" width="13" height="11" viewBox="0 0 13 11" ><path d="M1 1 L12 1 L6.5 6.5 Z" fill="#000"/><rect x="6" y="6" width="1" height="5" fill="#333"/></svg><svg class="a" style="left:84px;top:605px" width="11" height="14" viewBox="0 0 11 14" ><path d="M1 1 L7 7 L1 13 Z" fill="#000"/><rect x="7" y="6.5" width="4" height="1" fill="#333"/></svg><svg class="a" style="left:95px;top:155px" width="1023" height="577" viewBox="95 155 1023 577"><rect x="95" y="155" width="1023" height="577" fill="#000"/><rect x="229" y="155" width="2" height="577" fill="#161616"/><rect x="418" y="155" width="1" height="577" fill="#1e1e1e"/><rect x="606" y="155" width="1" height="577" fill="#1e1e1e"/><rect x="794" y="155" width="1" height="577" fill="#1e1e1e"/><rect x="982" y="155" width="2" height="577" fill="#161616"/><rect x="95" y="631" width="1023" height="1" fill="#262626"/><rect x="95" y="443" width="1023" height="1" fill="#262626"/><rect x="95" y="255" width="1023" height="1" fill="#262626"/><path d="M117 726h1v1h-1zM117 707h1v1h-1zM117 688h1v1h-1zM117 669h1v1h-1zM117 650h1v1h-1zM117 631h1v1h-1zM117 613h1v1h-1zM117 594h1v1h-1zM117 575h1v1h-1zM117 556h1v1h-1zM117 537h1v1h-1zM117 518h1v1h-1zM117 500h1v1h-1zM117 481h1v1h-1zM117 462h1v1h-1zM117 443h1v1h-1zM117 424h1v1h-1zM117 406h1v1h-1zM117 387h1v1h-1zM117 368h1v1h-1zM117 349h1v1h-1zM117 330h1v1h-1zM117 311h1v1h-1zM117 293h1v1h-1zM117 274h1v1h-1zM117 255h1v1h-1zM117 236h1v1h-1zM117 217h1v1h-1zM117 199h1v1h-1zM117 180h1v1h-1zM117 161h1v1h-1zM136 726h1v1h-1zM136 707h1v1h-1zM136 688h1v1h-1zM136 669h1v1h-1zM136 650h1v1h-1zM136 631h1v1h-1zM136 613h1v1h-1zM136 594h1v1h-1zM136 575h1v1h-1zM136 556h1v1h-1zM136 537h1v1h-1zM136 518h1v1h-1zM136 500h1v1h-1zM136 481h1v1h-1zM136 462h1v1h-1zM136 443h1v1h-1zM136 424h1v1h-1zM136 406h1v1h-1zM136 387h1v1h-1zM136 368h1v1h-1zM136 349h1v1h-1zM136 330h1v1h-1zM136 311h1v1h-1zM136 293h1v1h-1zM136 274h1v1h-1zM136 255h1v1h-1zM136 236h1v1h-1zM136 217h1v1h-1zM136 199h1v1h-1zM136 180h1v1h-1zM136 161h1v1h-1zM155 726h1v1h-1zM155 707h1v1h-1zM155 688h1v1h-1zM155 669h1v1h-1zM155 650h1v1h-1zM155 631h1v1h-1zM155 613h1v1h-1zM155 594h1v1h-1zM155 575h1v1h-1zM155 556h1v1h-1zM155 537h1v1h-1zM155 518h1v1h-1zM155 500h1v1h-1zM155 481h1v1h-1zM155 462h1v1h-1zM155 443h1v1h-1zM155 424h1v1h-1zM155 406h1v1h-1zM155 387h1v1h-1zM155 368h1v1h-1zM155 349h1v1h-1zM155 330h1v1h-1zM155 311h1v1h-1zM155 293h1v1h-1zM155 274h1v1h-1zM155 255h1v1h-1zM155 236h1v1h-1zM155 217h1v1h-1zM155 199h1v1h-1zM155 180h1v1h-1zM155 161h1v1h-1zM173 726h1v1h-1zM173 707h1v1h-1zM173 688h1v1h-1zM173 669h1v1h-1zM173 650h1v1h-1zM173 631h1v1h-1zM173 613h1v1h-1zM173 594h1v1h-1zM173 575h1v1h-1zM173 556h1v1h-1zM173 537h1v1h-1zM173 518h1v1h-1zM173 500h1v1h-1zM173 481h1v1h-1zM173 462h1v1h-1zM173 443h1v1h-1zM173 424h1v1h-1zM173 406h1v1h-1zM173 387h1v1h-1zM173 368h1v1h-1zM173 349h1v1h-1zM173 330h1v1h-1zM173 311h1v1h-1zM173 293h1v1h-1zM173 274h1v1h-1zM173 255h1v1h-1zM173 236h1v1h-1zM173 217h1v1h-1zM173 199h1v1h-1zM173 180h1v1h-1zM173 161h1v1h-1zM192 726h1v1h-1zM192 707h1v1h-1zM192 688h1v1h-1zM192 669h1v1h-1zM192 650h1v1h-1zM192 631h1v1h-1zM192 613h1v1h-1zM192 594h1v1h-1zM192 575h1v1h-1zM192 556h1v1h-1zM192 537h1v1h-1zM192 518h1v1h-1zM192 500h1v1h-1zM192 481h1v1h-1zM192 462h1v1h-1zM192 443h1v1h-1zM192 424h1v1h-1zM192 406h1v1h-1zM192 387h1v1h-1zM192 368h1v1h-1zM192 349h1v1h-1zM192 330h1v1h-1zM192 311h1v1h-1zM192 293h1v1h-1zM192 274h1v1h-1zM192 255h1v1h-1zM192 236h1v1h-1zM192 217h1v1h-1zM192 199h1v1h-1zM192 180h1v1h-1zM192 161h1v1h-1zM211 726h1v1h-1zM211 707h1v1h-1zM211 688h1v1h-1zM211 669h1v1h-1zM211 650h1v1h-1zM211 631h1v1h-1zM211 613h1v1h-1zM211 594h1v1h-1zM211 575h1v1h-1zM211 556h1v1h-1zM211 537h1v1h-1zM211 518h1v1h-1zM211 500h1v1h-1zM211 481h1v1h-1zM211 462h1v1h-1zM211 443h1v1h-1zM211 424h1v1h-1zM211 406h1v1h-1zM211 387h1v1h-1zM211 368h1v1h-1zM211 349h1v1h-1zM211 330h1v1h-1zM211 311h1v1h-1zM211 293h1v1h-1zM211 274h1v1h-1zM211 255h1v1h-1zM211 236h1v1h-1zM211 217h1v1h-1zM211 199h1v1h-1zM211 180h1v1h-1zM211 161h1v1h-1zM230 726h1v1h-1zM230 707h1v1h-1zM230 688h1v1h-1zM230 669h1v1h-1zM230 650h1v1h-1zM230 631h1v1h-1zM230 613h1v1h-1zM230 594h1v1h-1zM230 575h1v1h-1zM230 556h1v1h-1zM230 537h1v1h-1zM230 518h1v1h-1zM230 500h1v1h-1zM230 481h1v1h-1zM230 462h1v1h-1zM230 443h1v1h-1zM230 424h1v1h-1zM230 406h1v1h-1zM230 387h1v1h-1zM230 368h1v1h-1zM230 349h1v1h-1zM230 330h1v1h-1zM230 311h1v1h-1zM230 293h1v1h-1zM230 274h1v1h-1zM230 255h1v1h-1zM230 236h1v1h-1zM230 217h1v1h-1zM230 199h1v1h-1zM230 180h1v1h-1zM230 161h1v1h-1zM249 726h1v1h-1zM249 707h1v1h-1zM249 688h1v1h-1zM249 669h1v1h-1zM249 650h1v1h-1zM249 631h1v1h-1zM249 613h1v1h-1zM249 594h1v1h-1zM249 575h1v1h-1zM249 556h1v1h-1zM249 537h1v1h-1zM249 518h1v1h-1zM249 500h1v1h-1zM249 481h1v1h-1zM249 462h1v1h-1zM249 443h1v1h-1zM249 424h1v1h-1zM249 406h1v1h-1zM249 387h1v1h-1zM249 368h1v1h-1zM249 349h1v1h-1zM249 330h1v1h-1zM249 311h1v1h-1zM249 293h1v1h-1zM249 274h1v1h-1zM249 255h1v1h-1zM249 236h1v1h-1zM249 217h1v1h-1zM249 199h1v1h-1zM249 180h1v1h-1zM249 161h1v1h-1zM268 726h1v1h-1zM268 707h1v1h-1zM268 688h1v1h-1zM268 669h1v1h-1zM268 650h1v1h-1zM268 631h1v1h-1zM268 613h1v1h-1zM268 594h1v1h-1zM268 575h1v1h-1zM268 556h1v1h-1zM268 537h1v1h-1zM268 518h1v1h-1zM268 500h1v1h-1zM268 481h1v1h-1zM268 462h1v1h-1zM268 443h1v1h-1zM268 424h1v1h-1zM268 406h1v1h-1zM268 387h1v1h-1zM268 368h1v1h-1zM268 349h1v1h-1zM268 330h1v1h-1zM268 311h1v1h-1zM268 293h1v1h-1zM268 274h1v1h-1zM268 255h1v1h-1zM268 236h1v1h-1zM268 217h1v1h-1zM268 199h1v1h-1zM268 180h1v1h-1zM268 161h1v1h-1zM286 726h1v1h-1zM286 707h1v1h-1zM286 688h1v1h-1zM286 669h1v1h-1zM286 650h1v1h-1zM286 631h1v1h-1zM286 613h1v1h-1zM286 594h1v1h-1zM286 575h1v1h-1zM286 556h1v1h-1zM286 537h1v1h-1zM286 518h1v1h-1zM286 500h1v1h-1zM286 481h1v1h-1zM286 462h1v1h-1zM286 443h1v1h-1zM286 424h1v1h-1zM286 406h1v1h-1zM286 387h1v1h-1zM286 368h1v1h-1zM286 349h1v1h-1zM286 330h1v1h-1zM286 311h1v1h-1zM286 293h1v1h-1zM286 274h1v1h-1zM286 255h1v1h-1zM286 236h1v1h-1zM286 217h1v1h-1zM286 199h1v1h-1zM286 180h1v1h-1zM286 161h1v1h-1zM305 726h1v1h-1zM305 707h1v1h-1zM305 688h1v1h-1zM305 669h1v1h-1zM305 650h1v1h-1zM305 631h1v1h-1zM305 613h1v1h-1zM305 594h1v1h-1zM305 575h1v1h-1zM305 556h1v1h-1zM305 537h1v1h-1zM305 518h1v1h-1zM305 500h1v1h-1zM305 481h1v1h-1zM305 462h1v1h-1zM305 443h1v1h-1zM305 424h1v1h-1zM305 406h1v1h-1zM305 387h1v1h-1zM305 368h1v1h-1zM305 349h1v1h-1zM305 330h1v1h-1zM305 311h1v1h-1zM305 293h1v1h-1zM305 274h1v1h-1zM305 255h1v1h-1zM305 236h1v1h-1zM305 217h1v1h-1zM305 199h1v1h-1zM305 180h1v1h-1zM305 161h1v1h-1zM324 726h1v1h-1zM324 707h1v1h-1zM324 688h1v1h-1zM324 669h1v1h-1zM324 650h1v1h-1zM324 631h1v1h-1zM324 613h1v1h-1zM324 594h1v1h-1zM324 575h1v1h-1zM324 556h1v1h-1zM324 537h1v1h-1zM324 518h1v1h-1zM324 500h1v1h-1zM324 481h1v1h-1zM324 462h1v1h-1zM324 443h1v1h-1zM324 424h1v1h-1zM324 406h1v1h-1zM324 387h1v1h-1zM324 368h1v1h-1zM324 349h1v1h-1zM324 330h1v1h-1zM324 311h1v1h-1zM324 293h1v1h-1zM324 274h1v1h-1zM324 255h1v1h-1zM324 236h1v1h-1zM324 217h1v1h-1zM324 199h1v1h-1zM324 180h1v1h-1zM324 161h1v1h-1zM343 726h1v1h-1zM343 707h1v1h-1zM343 688h1v1h-1zM343 669h1v1h-1zM343 650h1v1h-1zM343 631h1v1h-1zM343 613h1v1h-1zM343 594h1v1h-1zM343 575h1v1h-1zM343 556h1v1h-1zM343 537h1v1h-1zM343 518h1v1h-1zM343 500h1v1h-1zM343 481h1v1h-1zM343 462h1v1h-1zM343 443h1v1h-1zM343 424h1v1h-1zM343 406h1v1h-1zM343 387h1v1h-1zM343 368h1v1h-1zM343 349h1v1h-1zM343 330h1v1h-1zM343 311h1v1h-1zM343 293h1v1h-1zM343 274h1v1h-1zM343 255h1v1h-1zM343 236h1v1h-1zM343 217h1v1h-1zM343 199h1v1h-1zM343 180h1v1h-1zM343 161h1v1h-1zM362 726h1v1h-1zM362 707h1v1h-1zM362 688h1v1h-1zM362 669h1v1h-1zM362 650h1v1h-1zM362 631h1v1h-1zM362 613h1v1h-1zM362 594h1v1h-1zM362 575h1v1h-1zM362 556h1v1h-1zM362 537h1v1h-1zM362 518h1v1h-1zM362 500h1v1h-1zM362 481h1v1h-1zM362 462h1v1h-1zM362 443h1v1h-1zM362 424h1v1h-1zM362 406h1v1h-1zM362 387h1v1h-1zM362 368h1v1h-1zM362 349h1v1h-1zM362 330h1v1h-1zM362 311h1v1h-1zM362 293h1v1h-1zM362 274h1v1h-1zM362 255h1v1h-1zM362 236h1v1h-1zM362 217h1v1h-1zM362 199h1v1h-1zM362 180h1v1h-1zM362 161h1v1h-1zM380 726h1v1h-1zM380 707h1v1h-1zM380 688h1v1h-1zM380 669h1v1h-1zM380 650h1v1h-1zM380 631h1v1h-1zM380 613h1v1h-1zM380 594h1v1h-1zM380 575h1v1h-1zM380 556h1v1h-1zM380 537h1v1h-1zM380 518h1v1h-1zM380 500h1v1h-1zM380 481h1v1h-1zM380 462h1v1h-1zM380 443h1v1h-1zM380 424h1v1h-1zM380 406h1v1h-1zM380 387h1v1h-1zM380 368h1v1h-1zM380 349h1v1h-1zM380 330h1v1h-1zM380 311h1v1h-1zM380 293h1v1h-1zM380 274h1v1h-1zM380 255h1v1h-1zM380 236h1v1h-1zM380 217h1v1h-1zM380 199h1v1h-1zM380 180h1v1h-1zM380 161h1v1h-1zM399 726h1v1h-1zM399 707h1v1h-1zM399 688h1v1h-1zM399 669h1v1h-1zM399 650h1v1h-1zM399 631h1v1h-1zM399 613h1v1h-1zM399 594h1v1h-1zM399 575h1v1h-1zM399 556h1v1h-1zM399 537h1v1h-1zM399 518h1v1h-1zM399 500h1v1h-1zM399 481h1v1h-1zM399 462h1v1h-1zM399 443h1v1h-1zM399 424h1v1h-1zM399 406h1v1h-1zM399 387h1v1h-1zM399 368h1v1h-1zM399 349h1v1h-1zM399 330h1v1h-1zM399 311h1v1h-1zM399 293h1v1h-1zM399 274h1v1h-1zM399 255h1v1h-1zM399 236h1v1h-1zM399 217h1v1h-1zM399 199h1v1h-1zM399 180h1v1h-1zM399 161h1v1h-1zM418 726h1v1h-1zM418 707h1v1h-1zM418 688h1v1h-1zM418 669h1v1h-1zM418 650h1v1h-1zM418 631h1v1h-1zM418 613h1v1h-1zM418 594h1v1h-1zM418 575h1v1h-1zM418 556h1v1h-1zM418 537h1v1h-1zM418 518h1v1h-1zM418 500h1v1h-1zM418 481h1v1h-1zM418 462h1v1h-1zM418 443h1v1h-1zM418 424h1v1h-1zM418 406h1v1h-1zM418 387h1v1h-1zM418 368h1v1h-1zM418 349h1v1h-1zM418 330h1v1h-1zM418 311h1v1h-1zM418 293h1v1h-1zM418 274h1v1h-1zM418 255h1v1h-1zM418 236h1v1h-1zM418 217h1v1h-1zM418 199h1v1h-1zM418 180h1v1h-1zM418 161h1v1h-1zM437 726h1v1h-1zM437 707h1v1h-1zM437 688h1v1h-1zM437 669h1v1h-1zM437 650h1v1h-1zM437 631h1v1h-1zM437 613h1v1h-1zM437 594h1v1h-1zM437 575h1v1h-1zM437 556h1v1h-1zM437 537h1v1h-1zM437 518h1v1h-1zM437 500h1v1h-1zM437 481h1v1h-1zM437 462h1v1h-1zM437 443h1v1h-1zM437 424h1v1h-1zM437 406h1v1h-1zM437 387h1v1h-1zM437 368h1v1h-1zM437 349h1v1h-1zM437 330h1v1h-1zM437 311h1v1h-1zM437 293h1v1h-1zM437 274h1v1h-1zM437 255h1v1h-1zM437 236h1v1h-1zM437 217h1v1h-1zM437 199h1v1h-1zM437 180h1v1h-1zM437 161h1v1h-1zM456 726h1v1h-1zM456 707h1v1h-1zM456 688h1v1h-1zM456 669h1v1h-1zM456 650h1v1h-1zM456 631h1v1h-1zM456 613h1v1h-1zM456 594h1v1h-1zM456 575h1v1h-1zM456 556h1v1h-1zM456 537h1v1h-1zM456 518h1v1h-1zM456 500h1v1h-1zM456 481h1v1h-1zM456 462h1v1h-1zM456 443h1v1h-1zM456 424h1v1h-1zM456 406h1v1h-1zM456 387h1v1h-1zM456 368h1v1h-1zM456 349h1v1h-1zM456 330h1v1h-1zM456 311h1v1h-1zM456 293h1v1h-1zM456 274h1v1h-1zM456 255h1v1h-1zM456 236h1v1h-1zM456 217h1v1h-1zM456 199h1v1h-1zM456 180h1v1h-1zM456 161h1v1h-1zM475 726h1v1h-1zM475 707h1v1h-1zM475 688h1v1h-1zM475 669h1v1h-1zM475 650h1v1h-1zM475 631h1v1h-1zM475 613h1v1h-1zM475 594h1v1h-1zM475 575h1v1h-1zM475 556h1v1h-1zM475 537h1v1h-1zM475 518h1v1h-1zM475 500h1v1h-1zM475 481h1v1h-1zM475 462h1v1h-1zM475 443h1v1h-1zM475 424h1v1h-1zM475 406h1v1h-1zM475 387h1v1h-1zM475 368h1v1h-1zM475 349h1v1h-1zM475 330h1v1h-1zM475 311h1v1h-1zM475 293h1v1h-1zM475 274h1v1h-1zM475 255h1v1h-1zM475 236h1v1h-1zM475 217h1v1h-1zM475 199h1v1h-1zM475 180h1v1h-1zM475 161h1v1h-1zM493 726h1v1h-1zM493 707h1v1h-1zM493 688h1v1h-1zM493 669h1v1h-1zM493 650h1v1h-1zM493 631h1v1h-1zM493 613h1v1h-1zM493 594h1v1h-1zM493 575h1v1h-1zM493 556h1v1h-1zM493 537h1v1h-1zM493 518h1v1h-1zM493 500h1v1h-1zM493 481h1v1h-1zM493 462h1v1h-1zM493 443h1v1h-1zM493 424h1v1h-1zM493 406h1v1h-1zM493 387h1v1h-1zM493 368h1v1h-1zM493 349h1v1h-1zM493 330h1v1h-1zM493 311h1v1h-1zM493 293h1v1h-1zM493 274h1v1h-1zM493 255h1v1h-1zM493 236h1v1h-1zM493 217h1v1h-1zM493 199h1v1h-1zM493 180h1v1h-1zM493 161h1v1h-1zM512 726h1v1h-1zM512 707h1v1h-1zM512 688h1v1h-1zM512 669h1v1h-1zM512 650h1v1h-1zM512 631h1v1h-1zM512 613h1v1h-1zM512 594h1v1h-1zM512 575h1v1h-1zM512 556h1v1h-1zM512 537h1v1h-1zM512 518h1v1h-1zM512 500h1v1h-1zM512 481h1v1h-1zM512 462h1v1h-1zM512 443h1v1h-1zM512 424h1v1h-1zM512 406h1v1h-1zM512 387h1v1h-1zM512 368h1v1h-1zM512 349h1v1h-1zM512 330h1v1h-1zM512 311h1v1h-1zM512 293h1v1h-1zM512 274h1v1h-1zM512 255h1v1h-1zM512 236h1v1h-1zM512 217h1v1h-1zM512 199h1v1h-1zM512 180h1v1h-1zM512 161h1v1h-1zM531 726h1v1h-1zM531 707h1v1h-1zM531 688h1v1h-1zM531 669h1v1h-1zM531 650h1v1h-1zM531 631h1v1h-1zM531 613h1v1h-1zM531 594h1v1h-1zM531 575h1v1h-1zM531 556h1v1h-1zM531 537h1v1h-1zM531 518h1v1h-1zM531 500h1v1h-1zM531 481h1v1h-1zM531 462h1v1h-1zM531 443h1v1h-1zM531 424h1v1h-1zM531 406h1v1h-1zM531 387h1v1h-1zM531 368h1v1h-1zM531 349h1v1h-1zM531 330h1v1h-1zM531 311h1v1h-1zM531 293h1v1h-1zM531 274h1v1h-1zM531 255h1v1h-1zM531 236h1v1h-1zM531 217h1v1h-1zM531 199h1v1h-1zM531 180h1v1h-1zM531 161h1v1h-1zM550 726h1v1h-1zM550 707h1v1h-1zM550 688h1v1h-1zM550 669h1v1h-1zM550 650h1v1h-1zM550 631h1v1h-1zM550 613h1v1h-1zM550 594h1v1h-1zM550 575h1v1h-1zM550 556h1v1h-1zM550 537h1v1h-1zM550 518h1v1h-1zM550 500h1v1h-1zM550 481h1v1h-1zM550 462h1v1h-1zM550 443h1v1h-1zM550 424h1v1h-1zM550 406h1v1h-1zM550 387h1v1h-1zM550 368h1v1h-1zM550 349h1v1h-1zM550 330h1v1h-1zM550 311h1v1h-1zM550 293h1v1h-1zM550 274h1v1h-1zM550 255h1v1h-1zM550 236h1v1h-1zM550 217h1v1h-1zM550 199h1v1h-1zM550 180h1v1h-1zM550 161h1v1h-1zM569 726h1v1h-1zM569 707h1v1h-1zM569 688h1v1h-1zM569 669h1v1h-1zM569 650h1v1h-1zM569 631h1v1h-1zM569 613h1v1h-1zM569 594h1v1h-1zM569 575h1v1h-1zM569 556h1v1h-1zM569 537h1v1h-1zM569 518h1v1h-1zM569 500h1v1h-1zM569 481h1v1h-1zM569 462h1v1h-1zM569 443h1v1h-1zM569 424h1v1h-1zM569 406h1v1h-1zM569 387h1v1h-1zM569 368h1v1h-1zM569 349h1v1h-1zM569 330h1v1h-1zM569 311h1v1h-1zM569 293h1v1h-1zM569 274h1v1h-1zM569 255h1v1h-1zM569 236h1v1h-1zM569 217h1v1h-1zM569 199h1v1h-1zM569 180h1v1h-1zM569 161h1v1h-1zM587 726h1v1h-1zM587 707h1v1h-1zM587 688h1v1h-1zM587 669h1v1h-1zM587 650h1v1h-1zM587 631h1v1h-1zM587 613h1v1h-1zM587 594h1v1h-1zM587 575h1v1h-1zM587 556h1v1h-1zM587 537h1v1h-1zM587 518h1v1h-1zM587 500h1v1h-1zM587 481h1v1h-1zM587 462h1v1h-1zM587 443h1v1h-1zM587 424h1v1h-1zM587 406h1v1h-1zM587 387h1v1h-1zM587 368h1v1h-1zM587 349h1v1h-1zM587 330h1v1h-1zM587 311h1v1h-1zM587 293h1v1h-1zM587 274h1v1h-1zM587 255h1v1h-1zM587 236h1v1h-1zM587 217h1v1h-1zM587 199h1v1h-1zM587 180h1v1h-1zM587 161h1v1h-1zM606 726h1v1h-1zM606 707h1v1h-1zM606 688h1v1h-1zM606 669h1v1h-1zM606 650h1v1h-1zM606 631h1v1h-1zM606 613h1v1h-1zM606 594h1v1h-1zM606 575h1v1h-1zM606 556h1v1h-1zM606 537h1v1h-1zM606 518h1v1h-1zM606 500h1v1h-1zM606 481h1v1h-1zM606 462h1v1h-1zM606 443h1v1h-1zM606 424h1v1h-1zM606 406h1v1h-1zM606 387h1v1h-1zM606 368h1v1h-1zM606 349h1v1h-1zM606 330h1v1h-1zM606 311h1v1h-1zM606 293h1v1h-1zM606 274h1v1h-1zM606 255h1v1h-1zM606 236h1v1h-1zM606 217h1v1h-1zM606 199h1v1h-1zM606 180h1v1h-1zM606 161h1v1h-1zM625 726h1v1h-1zM625 707h1v1h-1zM625 688h1v1h-1zM625 669h1v1h-1zM625 650h1v1h-1zM625 631h1v1h-1zM625 613h1v1h-1zM625 594h1v1h-1zM625 575h1v1h-1zM625 556h1v1h-1zM625 537h1v1h-1zM625 518h1v1h-1zM625 500h1v1h-1zM625 481h1v1h-1zM625 462h1v1h-1zM625 443h1v1h-1zM625 424h1v1h-1zM625 406h1v1h-1zM625 387h1v1h-1zM625 368h1v1h-1zM625 349h1v1h-1zM625 330h1v1h-1zM625 311h1v1h-1zM625 293h1v1h-1zM625 274h1v1h-1zM625 255h1v1h-1zM625 236h1v1h-1zM625 217h1v1h-1zM625 199h1v1h-1zM625 180h1v1h-1zM625 161h1v1h-1zM644 726h1v1h-1zM644 707h1v1h-1zM644 688h1v1h-1zM644 669h1v1h-1zM644 650h1v1h-1zM644 631h1v1h-1zM644 613h1v1h-1zM644 594h1v1h-1zM644 575h1v1h-1zM644 556h1v1h-1zM644 537h1v1h-1zM644 518h1v1h-1zM644 500h1v1h-1zM644 481h1v1h-1zM644 462h1v1h-1zM644 443h1v1h-1zM644 424h1v1h-1zM644 406h1v1h-1zM644 387h1v1h-1zM644 368h1v1h-1zM644 349h1v1h-1zM644 330h1v1h-1zM644 311h1v1h-1zM644 293h1v1h-1zM644 274h1v1h-1zM644 255h1v1h-1zM644 236h1v1h-1zM644 217h1v1h-1zM644 199h1v1h-1zM644 180h1v1h-1zM644 161h1v1h-1zM663 726h1v1h-1zM663 707h1v1h-1zM663 688h1v1h-1zM663 669h1v1h-1zM663 650h1v1h-1zM663 631h1v1h-1zM663 613h1v1h-1zM663 594h1v1h-1zM663 575h1v1h-1zM663 556h1v1h-1zM663 537h1v1h-1zM663 518h1v1h-1zM663 500h1v1h-1zM663 481h1v1h-1zM663 462h1v1h-1zM663 443h1v1h-1zM663 424h1v1h-1zM663 406h1v1h-1zM663 387h1v1h-1zM663 368h1v1h-1zM663 349h1v1h-1zM663 330h1v1h-1zM663 311h1v1h-1zM663 293h1v1h-1zM663 274h1v1h-1zM663 255h1v1h-1zM663 236h1v1h-1zM663 217h1v1h-1zM663 199h1v1h-1zM663 180h1v1h-1zM663 161h1v1h-1zM682 726h1v1h-1zM682 707h1v1h-1zM682 688h1v1h-1zM682 669h1v1h-1zM682 650h1v1h-1zM682 631h1v1h-1zM682 613h1v1h-1zM682 594h1v1h-1zM682 575h1v1h-1zM682 556h1v1h-1zM682 537h1v1h-1zM682 518h1v1h-1zM682 500h1v1h-1zM682 481h1v1h-1zM682 462h1v1h-1zM682 443h1v1h-1zM682 424h1v1h-1zM682 406h1v1h-1zM682 387h1v1h-1zM682 368h1v1h-1zM682 349h1v1h-1zM682 330h1v1h-1zM682 311h1v1h-1zM682 293h1v1h-1zM682 274h1v1h-1zM682 255h1v1h-1zM682 236h1v1h-1zM682 217h1v1h-1zM682 199h1v1h-1zM682 180h1v1h-1zM682 161h1v1h-1zM700 726h1v1h-1zM700 707h1v1h-1zM700 688h1v1h-1zM700 669h1v1h-1zM700 650h1v1h-1zM700 631h1v1h-1zM700 613h1v1h-1zM700 594h1v1h-1zM700 575h1v1h-1zM700 556h1v1h-1zM700 537h1v1h-1zM700 518h1v1h-1zM700 500h1v1h-1zM700 481h1v1h-1zM700 462h1v1h-1zM700 443h1v1h-1zM700 424h1v1h-1zM700 406h1v1h-1zM700 387h1v1h-1zM700 368h1v1h-1zM700 349h1v1h-1zM700 330h1v1h-1zM700 311h1v1h-1zM700 293h1v1h-1zM700 274h1v1h-1zM700 255h1v1h-1zM700 236h1v1h-1zM700 217h1v1h-1zM700 199h1v1h-1zM700 180h1v1h-1zM700 161h1v1h-1zM719 726h1v1h-1zM719 707h1v1h-1zM719 688h1v1h-1zM719 669h1v1h-1zM719 650h1v1h-1zM719 631h1v1h-1zM719 613h1v1h-1zM719 594h1v1h-1zM719 575h1v1h-1zM719 556h1v1h-1zM719 537h1v1h-1zM719 518h1v1h-1zM719 500h1v1h-1zM719 481h1v1h-1zM719 462h1v1h-1zM719 443h1v1h-1zM719 424h1v1h-1zM719 406h1v1h-1zM719 387h1v1h-1zM719 368h1v1h-1zM719 349h1v1h-1zM719 330h1v1h-1zM719 311h1v1h-1zM719 293h1v1h-1zM719 274h1v1h-1zM719 255h1v1h-1zM719 236h1v1h-1zM719 217h1v1h-1zM719 199h1v1h-1zM719 180h1v1h-1zM719 161h1v1h-1zM738 726h1v1h-1zM738 707h1v1h-1zM738 688h1v1h-1zM738 669h1v1h-1zM738 650h1v1h-1zM738 631h1v1h-1zM738 613h1v1h-1zM738 594h1v1h-1zM738 575h1v1h-1zM738 556h1v1h-1zM738 537h1v1h-1zM738 518h1v1h-1zM738 500h1v1h-1zM738 481h1v1h-1zM738 462h1v1h-1zM738 443h1v1h-1zM738 424h1v1h-1zM738 406h1v1h-1zM738 387h1v1h-1zM738 368h1v1h-1zM738 349h1v1h-1zM738 330h1v1h-1zM738 311h1v1h-1zM738 293h1v1h-1zM738 274h1v1h-1zM738 255h1v1h-1zM738 236h1v1h-1zM738 217h1v1h-1zM738 199h1v1h-1zM738 180h1v1h-1zM738 161h1v1h-1zM757 726h1v1h-1zM757 707h1v1h-1zM757 688h1v1h-1zM757 669h1v1h-1zM757 650h1v1h-1zM757 631h1v1h-1zM757 613h1v1h-1zM757 594h1v1h-1zM757 575h1v1h-1zM757 556h1v1h-1zM757 537h1v1h-1zM757 518h1v1h-1zM757 500h1v1h-1zM757 481h1v1h-1zM757 462h1v1h-1zM757 443h1v1h-1zM757 424h1v1h-1zM757 406h1v1h-1zM757 387h1v1h-1zM757 368h1v1h-1zM757 349h1v1h-1zM757 330h1v1h-1zM757 311h1v1h-1zM757 293h1v1h-1zM757 274h1v1h-1zM757 255h1v1h-1zM757 236h1v1h-1zM757 217h1v1h-1zM757 199h1v1h-1zM757 180h1v1h-1zM757 161h1v1h-1zM776 726h1v1h-1zM776 707h1v1h-1zM776 688h1v1h-1zM776 669h1v1h-1zM776 650h1v1h-1zM776 631h1v1h-1zM776 613h1v1h-1zM776 594h1v1h-1zM776 575h1v1h-1zM776 556h1v1h-1zM776 537h1v1h-1zM776 518h1v1h-1zM776 500h1v1h-1zM776 481h1v1h-1zM776 462h1v1h-1zM776 443h1v1h-1zM776 424h1v1h-1zM776 406h1v1h-1zM776 387h1v1h-1zM776 368h1v1h-1zM776 349h1v1h-1zM776 330h1v1h-1zM776 311h1v1h-1zM776 293h1v1h-1zM776 274h1v1h-1zM776 255h1v1h-1zM776 236h1v1h-1zM776 217h1v1h-1zM776 199h1v1h-1zM776 180h1v1h-1zM776 161h1v1h-1zM795 726h1v1h-1zM795 707h1v1h-1zM795 688h1v1h-1zM795 669h1v1h-1zM795 650h1v1h-1zM795 631h1v1h-1zM795 613h1v1h-1zM795 594h1v1h-1zM795 575h1v1h-1zM795 556h1v1h-1zM795 537h1v1h-1zM795 518h1v1h-1zM795 500h1v1h-1zM795 481h1v1h-1zM795 462h1v1h-1zM795 443h1v1h-1zM795 424h1v1h-1zM795 406h1v1h-1zM795 387h1v1h-1zM795 368h1v1h-1zM795 349h1v1h-1zM795 330h1v1h-1zM795 311h1v1h-1zM795 293h1v1h-1zM795 274h1v1h-1zM795 255h1v1h-1zM795 236h1v1h-1zM795 217h1v1h-1zM795 199h1v1h-1zM795 180h1v1h-1zM795 161h1v1h-1zM813 726h1v1h-1zM813 707h1v1h-1zM813 688h1v1h-1zM813 669h1v1h-1zM813 650h1v1h-1zM813 631h1v1h-1zM813 613h1v1h-1zM813 594h1v1h-1zM813 575h1v1h-1zM813 556h1v1h-1zM813 537h1v1h-1zM813 518h1v1h-1zM813 500h1v1h-1zM813 481h1v1h-1zM813 462h1v1h-1zM813 443h1v1h-1zM813 424h1v1h-1zM813 406h1v1h-1zM813 387h1v1h-1zM813 368h1v1h-1zM813 349h1v1h-1zM813 330h1v1h-1zM813 311h1v1h-1zM813 293h1v1h-1zM813 274h1v1h-1zM813 255h1v1h-1zM813 236h1v1h-1zM813 217h1v1h-1zM813 199h1v1h-1zM813 180h1v1h-1zM813 161h1v1h-1zM832 726h1v1h-1zM832 707h1v1h-1zM832 688h1v1h-1zM832 669h1v1h-1zM832 650h1v1h-1zM832 631h1v1h-1zM832 613h1v1h-1zM832 594h1v1h-1zM832 575h1v1h-1zM832 556h1v1h-1zM832 537h1v1h-1zM832 518h1v1h-1zM832 500h1v1h-1zM832 481h1v1h-1zM832 462h1v1h-1zM832 443h1v1h-1zM832 424h1v1h-1zM832 406h1v1h-1zM832 387h1v1h-1zM832 368h1v1h-1zM832 349h1v1h-1zM832 330h1v1h-1zM832 311h1v1h-1zM832 293h1v1h-1zM832 274h1v1h-1zM832 255h1v1h-1zM832 236h1v1h-1zM832 217h1v1h-1zM832 199h1v1h-1zM832 180h1v1h-1zM832 161h1v1h-1zM851 726h1v1h-1zM851 707h1v1h-1zM851 688h1v1h-1zM851 669h1v1h-1zM851 650h1v1h-1zM851 631h1v1h-1zM851 613h1v1h-1zM851 594h1v1h-1zM851 575h1v1h-1zM851 556h1v1h-1zM851 537h1v1h-1zM851 518h1v1h-1zM851 500h1v1h-1zM851 481h1v1h-1zM851 462h1v1h-1zM851 443h1v1h-1zM851 424h1v1h-1zM851 406h1v1h-1zM851 387h1v1h-1zM851 368h1v1h-1zM851 349h1v1h-1zM851 330h1v1h-1zM851 311h1v1h-1zM851 293h1v1h-1zM851 274h1v1h-1zM851 255h1v1h-1zM851 236h1v1h-1zM851 217h1v1h-1zM851 199h1v1h-1zM851 180h1v1h-1zM851 161h1v1h-1zM870 726h1v1h-1zM870 707h1v1h-1zM870 688h1v1h-1zM870 669h1v1h-1zM870 650h1v1h-1zM870 631h1v1h-1zM870 613h1v1h-1zM870 594h1v1h-1zM870 575h1v1h-1zM870 556h1v1h-1zM870 537h1v1h-1zM870 518h1v1h-1zM870 500h1v1h-1zM870 481h1v1h-1zM870 462h1v1h-1zM870 443h1v1h-1zM870 424h1v1h-1zM870 406h1v1h-1zM870 387h1v1h-1zM870 368h1v1h-1zM870 349h1v1h-1zM870 330h1v1h-1zM870 311h1v1h-1zM870 293h1v1h-1zM870 274h1v1h-1zM870 255h1v1h-1zM870 236h1v1h-1zM870 217h1v1h-1zM870 199h1v1h-1zM870 180h1v1h-1zM870 161h1v1h-1zM889 726h1v1h-1zM889 707h1v1h-1zM889 688h1v1h-1zM889 669h1v1h-1zM889 650h1v1h-1zM889 631h1v1h-1zM889 613h1v1h-1zM889 594h1v1h-1zM889 575h1v1h-1zM889 556h1v1h-1zM889 537h1v1h-1zM889 518h1v1h-1zM889 500h1v1h-1zM889 481h1v1h-1zM889 462h1v1h-1zM889 443h1v1h-1zM889 424h1v1h-1zM889 406h1v1h-1zM889 387h1v1h-1zM889 368h1v1h-1zM889 349h1v1h-1zM889 330h1v1h-1zM889 311h1v1h-1zM889 293h1v1h-1zM889 274h1v1h-1zM889 255h1v1h-1zM889 236h1v1h-1zM889 217h1v1h-1zM889 199h1v1h-1zM889 180h1v1h-1zM889 161h1v1h-1zM907 726h1v1h-1zM907 707h1v1h-1zM907 688h1v1h-1zM907 669h1v1h-1zM907 650h1v1h-1zM907 631h1v1h-1zM907 613h1v1h-1zM907 594h1v1h-1zM907 575h1v1h-1zM907 556h1v1h-1zM907 537h1v1h-1zM907 518h1v1h-1zM907 500h1v1h-1zM907 481h1v1h-1zM907 462h1v1h-1zM907 443h1v1h-1zM907 424h1v1h-1zM907 406h1v1h-1zM907 387h1v1h-1zM907 368h1v1h-1zM907 349h1v1h-1zM907 330h1v1h-1zM907 311h1v1h-1zM907 293h1v1h-1zM907 274h1v1h-1zM907 255h1v1h-1zM907 236h1v1h-1zM907 217h1v1h-1zM907 199h1v1h-1zM907 180h1v1h-1zM907 161h1v1h-1zM926 726h1v1h-1zM926 707h1v1h-1zM926 688h1v1h-1zM926 669h1v1h-1zM926 650h1v1h-1zM926 631h1v1h-1zM926 613h1v1h-1zM926 594h1v1h-1zM926 575h1v1h-1zM926 556h1v1h-1zM926 537h1v1h-1zM926 518h1v1h-1zM926 500h1v1h-1zM926 481h1v1h-1zM926 462h1v1h-1zM926 443h1v1h-1zM926 424h1v1h-1zM926 406h1v1h-1zM926 387h1v1h-1zM926 368h1v1h-1zM926 349h1v1h-1zM926 330h1v1h-1zM926 311h1v1h-1zM926 293h1v1h-1zM926 274h1v1h-1zM926 255h1v1h-1zM926 236h1v1h-1zM926 217h1v1h-1zM926 199h1v1h-1zM926 180h1v1h-1zM926 161h1v1h-1zM945 726h1v1h-1zM945 707h1v1h-1zM945 688h1v1h-1zM945 669h1v1h-1zM945 650h1v1h-1zM945 631h1v1h-1zM945 613h1v1h-1zM945 594h1v1h-1zM945 575h1v1h-1zM945 556h1v1h-1zM945 537h1v1h-1zM945 518h1v1h-1zM945 500h1v1h-1zM945 481h1v1h-1zM945 462h1v1h-1zM945 443h1v1h-1zM945 424h1v1h-1zM945 406h1v1h-1zM945 387h1v1h-1zM945 368h1v1h-1zM945 349h1v1h-1zM945 330h1v1h-1zM945 311h1v1h-1zM945 293h1v1h-1zM945 274h1v1h-1zM945 255h1v1h-1zM945 236h1v1h-1zM945 217h1v1h-1zM945 199h1v1h-1zM945 180h1v1h-1zM945 161h1v1h-1zM964 726h1v1h-1zM964 707h1v1h-1zM964 688h1v1h-1zM964 669h1v1h-1zM964 650h1v1h-1zM964 631h1v1h-1zM964 613h1v1h-1zM964 594h1v1h-1zM964 575h1v1h-1zM964 556h1v1h-1zM964 537h1v1h-1zM964 518h1v1h-1zM964 500h1v1h-1zM964 481h1v1h-1zM964 462h1v1h-1zM964 443h1v1h-1zM964 424h1v1h-1zM964 406h1v1h-1zM964 387h1v1h-1zM964 368h1v1h-1zM964 349h1v1h-1zM964 330h1v1h-1zM964 311h1v1h-1zM964 293h1v1h-1zM964 274h1v1h-1zM964 255h1v1h-1zM964 236h1v1h-1zM964 217h1v1h-1zM964 199h1v1h-1zM964 180h1v1h-1zM964 161h1v1h-1zM983 726h1v1h-1zM983 707h1v1h-1zM983 688h1v1h-1zM983 669h1v1h-1zM983 650h1v1h-1zM983 631h1v1h-1zM983 613h1v1h-1zM983 594h1v1h-1zM983 575h1v1h-1zM983 556h1v1h-1zM983 537h1v1h-1zM983 518h1v1h-1zM983 500h1v1h-1zM983 481h1v1h-1zM983 462h1v1h-1zM983 443h1v1h-1zM983 424h1v1h-1zM983 406h1v1h-1zM983 387h1v1h-1zM983 368h1v1h-1zM983 349h1v1h-1zM983 330h1v1h-1zM983 311h1v1h-1zM983 293h1v1h-1zM983 274h1v1h-1zM983 255h1v1h-1zM983 236h1v1h-1zM983 217h1v1h-1zM983 199h1v1h-1zM983 180h1v1h-1zM983 161h1v1h-1zM1002 726h1v1h-1zM1002 707h1v1h-1zM1002 688h1v1h-1zM1002 669h1v1h-1zM1002 650h1v1h-1zM1002 631h1v1h-1zM1002 613h1v1h-1zM1002 594h1v1h-1zM1002 575h1v1h-1zM1002 556h1v1h-1zM1002 537h1v1h-1zM1002 518h1v1h-1zM1002 500h1v1h-1zM1002 481h1v1h-1zM1002 462h1v1h-1zM1002 443h1v1h-1zM1002 424h1v1h-1zM1002 406h1v1h-1zM1002 387h1v1h-1zM1002 368h1v1h-1zM1002 349h1v1h-1zM1002 330h1v1h-1zM1002 311h1v1h-1zM1002 293h1v1h-1zM1002 274h1v1h-1zM1002 255h1v1h-1zM1002 236h1v1h-1zM1002 217h1v1h-1zM1002 199h1v1h-1zM1002 180h1v1h-1zM1002 161h1v1h-1zM1020 726h1v1h-1zM1020 707h1v1h-1zM1020 688h1v1h-1zM1020 669h1v1h-1zM1020 650h1v1h-1zM1020 631h1v1h-1zM1020 613h1v1h-1zM1020 594h1v1h-1zM1020 575h1v1h-1zM1020 556h1v1h-1zM1020 537h1v1h-1zM1020 518h1v1h-1zM1020 500h1v1h-1zM1020 481h1v1h-1zM1020 462h1v1h-1zM1020 443h1v1h-1zM1020 424h1v1h-1zM1020 406h1v1h-1zM1020 387h1v1h-1zM1020 368h1v1h-1zM1020 349h1v1h-1zM1020 330h1v1h-1zM1020 311h1v1h-1zM1020 293h1v1h-1zM1020 274h1v1h-1zM1020 255h1v1h-1zM1020 236h1v1h-1zM1020 217h1v1h-1zM1020 199h1v1h-1zM1020 180h1v1h-1zM1020 161h1v1h-1zM1039 726h1v1h-1zM1039 707h1v1h-1zM1039 688h1v1h-1zM1039 669h1v1h-1zM1039 650h1v1h-1zM1039 631h1v1h-1zM1039 613h1v1h-1zM1039 594h1v1h-1zM1039 575h1v1h-1zM1039 556h1v1h-1zM1039 537h1v1h-1zM1039 518h1v1h-1zM1039 500h1v1h-1zM1039 481h1v1h-1zM1039 462h1v1h-1zM1039 443h1v1h-1zM1039 424h1v1h-1zM1039 406h1v1h-1zM1039 387h1v1h-1zM1039 368h1v1h-1zM1039 349h1v1h-1zM1039 330h1v1h-1zM1039 311h1v1h-1zM1039 293h1v1h-1zM1039 274h1v1h-1zM1039 255h1v1h-1zM1039 236h1v1h-1zM1039 217h1v1h-1zM1039 199h1v1h-1zM1039 180h1v1h-1zM1039 161h1v1h-1zM1058 726h1v1h-1zM1058 707h1v1h-1zM1058 688h1v1h-1zM1058 669h1v1h-1zM1058 650h1v1h-1zM1058 631h1v1h-1zM1058 613h1v1h-1zM1058 594h1v1h-1zM1058 575h1v1h-1zM1058 556h1v1h-1zM1058 537h1v1h-1zM1058 518h1v1h-1zM1058 500h1v1h-1zM1058 481h1v1h-1zM1058 462h1v1h-1zM1058 443h1v1h-1zM1058 424h1v1h-1zM1058 406h1v1h-1zM1058 387h1v1h-1zM1058 368h1v1h-1zM1058 349h1v1h-1zM1058 330h1v1h-1zM1058 311h1v1h-1zM1058 293h1v1h-1zM1058 274h1v1h-1zM1058 255h1v1h-1zM1058 236h1v1h-1zM1058 217h1v1h-1zM1058 199h1v1h-1zM1058 180h1v1h-1zM1058 161h1v1h-1zM1077 726h1v1h-1zM1077 707h1v1h-1zM1077 688h1v1h-1zM1077 669h1v1h-1zM1077 650h1v1h-1zM1077 631h1v1h-1zM1077 613h1v1h-1zM1077 594h1v1h-1zM1077 575h1v1h-1zM1077 556h1v1h-1zM1077 537h1v1h-1zM1077 518h1v1h-1zM1077 500h1v1h-1zM1077 481h1v1h-1zM1077 462h1v1h-1zM1077 443h1v1h-1zM1077 424h1v1h-1zM1077 406h1v1h-1zM1077 387h1v1h-1zM1077 368h1v1h-1zM1077 349h1v1h-1zM1077 330h1v1h-1zM1077 311h1v1h-1zM1077 293h1v1h-1zM1077 274h1v1h-1zM1077 255h1v1h-1zM1077 236h1v1h-1zM1077 217h1v1h-1zM1077 199h1v1h-1zM1077 180h1v1h-1zM1077 161h1v1h-1zM1096 726h1v1h-1zM1096 707h1v1h-1zM1096 688h1v1h-1zM1096 669h1v1h-1zM1096 650h1v1h-1zM1096 631h1v1h-1zM1096 613h1v1h-1zM1096 594h1v1h-1zM1096 575h1v1h-1zM1096 556h1v1h-1zM1096 537h1v1h-1zM1096 518h1v1h-1zM1096 500h1v1h-1zM1096 481h1v1h-1zM1096 462h1v1h-1zM1096 443h1v1h-1zM1096 424h1v1h-1zM1096 406h1v1h-1zM1096 387h1v1h-1zM1096 368h1v1h-1zM1096 349h1v1h-1zM1096 330h1v1h-1zM1096 311h1v1h-1zM1096 293h1v1h-1zM1096 274h1v1h-1zM1096 255h1v1h-1zM1096 236h1v1h-1zM1096 217h1v1h-1zM1096 199h1v1h-1zM1096 180h1v1h-1zM1096 161h1v1h-1zM1114 726h1v1h-1zM1114 707h1v1h-1zM1114 688h1v1h-1zM1114 669h1v1h-1zM1114 650h1v1h-1zM1114 631h1v1h-1zM1114 613h1v1h-1zM1114 594h1v1h-1zM1114 575h1v1h-1zM1114 556h1v1h-1zM1114 537h1v1h-1zM1114 518h1v1h-1zM1114 500h1v1h-1zM1114 481h1v1h-1zM1114 462h1v1h-1zM1114 443h1v1h-1zM1114 424h1v1h-1zM1114 406h1v1h-1zM1114 387h1v1h-1zM1114 368h1v1h-1zM1114 349h1v1h-1zM1114 330h1v1h-1zM1114 311h1v1h-1zM1114 293h1v1h-1zM1114 274h1v1h-1zM1114 255h1v1h-1zM1114 236h1v1h-1zM1114 217h1v1h-1zM1114 199h1v1h-1zM1114 180h1v1h-1zM1114 161h1v1h-1z" fill="#434343"/><circle cx="606.60" cy="443.30" r="188.20" fill="none" stroke="#d0d0d0" stroke-width="1"/><circle cx="606.60" cy="443.30" r="169.38" fill="none" stroke="#d0d0d0" stroke-width="1"/><circle cx="606.60" cy="443.30" r="158" fill="none" stroke="#5a1c1c" stroke-width="0.9"/><circle cx="606.60" cy="443.30" r="146.5" fill="none" stroke="#5a1c1c" stroke-width="0.9"/><g transform="translate(662.25,322.29)"><path d="M9.1 31 L9.1 0" stroke="#74362f" stroke-width="3.8" fill="none"/><path d="M8.6 0.8 C7.6 5.3 4.8 8.1 0.2 9.4" stroke="#74362f" stroke-width="3.1" fill="none"/></g><path d="M2.0 10.2 C2.0 4.8 5.2 1.7 10.1 1.7 C14.9 1.7 18.1 4.6 18.1 9.1 C18.1 12.9 16.2 15 12.6 17.1 L7.6 20 C3.9 22.2 1.9 25.2 1.7 29.3 L20 29.3" transform="translate(702.51,367.05)" stroke="#74362f" stroke-width="3.3" fill="none" stroke-linejoin="round"/><path d="M2.2 8.8 C2.6 4.2 5.6 1.7 10.2 1.7 C14.8 1.7 17.7 4.3 17.7 8.0 C17.7 11.8 14.8 14.3 10.4 14.3 L8.2 14.3 M10.4 14.3 C15.5 14.3 18.9 17.3 18.9 21.6 C18.9 26.3 15.3 29.3 10.2 29.3 C5.1 29.3 1.9 26.6 1.6 21.9" transform="translate(718.60,428.20)" stroke="#74362f" stroke-width="3.3" fill="none" stroke-linejoin="round"/><path d="M14.6 31 L14.6 1.7 L1.7 20.6 L20.8 20.6" transform="translate(702.11,489.35)" stroke="#74362f" stroke-width="3.3" fill="none" stroke-linejoin="round"/><path d="M18.2 1.7 L4.3 1.7 L2.7 15.2 C4.3 13.3 6.9 12.1 10.1 12.1 C15.2 12.1 18.3 15.6 18.3 20.6 C18.3 25.9 14.8 29.3 9.9 29.3 C5.5 29.3 2.4 27 1.8 23.2" transform="translate(657.75,534.11)" stroke="#74362f" stroke-width="3.3" fill="none" stroke-linejoin="round"/><path d="M17.8 8.2 C17.2 4.2 14.4 1.7 10.4 1.7 C4.8 1.7 1.7 6.5 1.7 15.3 C1.7 24.8 4.8 29.3 10.3 29.3 C15.1 29.3 18.3 26 18.3 20.9 C18.3 15.7 15.2 12.4 10.4 12.4 C6.3 12.4 3.1 14.7 2.0 18.6" transform="translate(596.60,550.50)" stroke="#74362f" stroke-width="3.3" fill="none" stroke-linejoin="round"/><path d="M0.2 1.7 L18.4 1.7 C13 8.3 8.8 18.2 7.8 31" transform="translate(535.45,534.11)" stroke="#74362f" stroke-width="3.3" fill="none" stroke-linejoin="round"/><path d="M10 1.7 C14.3 1.7 17.2 4.1 17.2 7.8 C17.2 11.5 14.3 14 10 14 C5.7 14 2.8 11.5 2.8 7.8 C2.8 4.1 5.7 1.7 10 1.7 Z M10 14 C15 14 18.3 17 18.3 21.6 C18.3 26.3 15 29.3 10 29.3 C5 29.3 1.7 26.3 1.7 21.6 C1.7 17 5 14 10 14 Z" transform="translate(490.69,489.35)" stroke="#74362f" stroke-width="3.3" fill="none" stroke-linejoin="round"/><path d="M2.2 22.8 C2.8 26.8 5.6 29.3 9.6 29.3 C15.2 29.3 18.3 24.5 18.3 15.7 C18.3 6.2 15.2 1.7 9.7 1.7 C4.9 1.7 1.7 5 1.7 10.1 C1.7 15.3 4.8 18.6 9.6 18.6 C13.7 18.6 16.9 16.3 18 12.4" transform="translate(474.30,428.20)" stroke="#74362f" stroke-width="3.3" fill="none" stroke-linejoin="round"/><g transform="translate(480.19,367.05)"><path d="M9.1 31 L9.1 0" stroke="#74362f" stroke-width="3.8" fill="none"/><path d="M8.6 0.8 C7.6 5.3 4.8 8.1 0.2 9.4" stroke="#74362f" stroke-width="3.1" fill="none"/></g><path d="M10 1.7 C15.2 1.7 18.3 6.5 18.3 15.5 C18.3 24.5 15.2 29.3 10 29.3 C4.8 29.3 1.7 24.5 1.7 15.5 C1.7 6.5 4.8 1.7 10 1.7 Z" transform="translate(501.19,367.05)" stroke="#74362f" stroke-width="3.3" fill="none" stroke-linejoin="round"/><g transform="translate(529.45,322.29)"><path d="M9.1 31 L9.1 0" stroke="#74362f" stroke-width="3.8" fill="none"/><path d="M8.6 0.8 C7.6 5.3 4.8 8.1 0.2 9.4" stroke="#74362f" stroke-width="3.1" fill="none"/></g><g transform="translate(550.45,322.29)"><path d="M9.1 31 L9.1 0" stroke="#74362f" stroke-width="3.8" fill="none"/><path d="M8.6 0.8 C7.6 5.3 4.8 8.1 0.2 9.4" stroke="#74362f" stroke-width="3.1" fill="none"/></g><g transform="translate(586.10,305.90)"><path d="M9.1 31 L9.1 0" stroke="#74362f" stroke-width="3.8" fill="none"/><path d="M8.6 0.8 C7.6 5.3 4.8 8.1 0.2 9.4" stroke="#74362f" stroke-width="3.1" fill="none"/></g><path d="M2.0 10.2 C2.0 4.8 5.2 1.7 10.1 1.7 C14.9 1.7 18.1 4.6 18.1 9.1 C18.1 12.9 16.2 15 12.6 17.1 L7.6 20 C3.9 22.2 1.9 25.2 1.7 29.3 L20 29.3" transform="translate(607.10,305.90)" stroke="#74362f" stroke-width="3.3" fill="none" stroke-linejoin="round"/><rect x="602.10" y="371.40" width="9" height="9" fill="#0000b4" stroke="#a8a8a8" stroke-opacity="0.75" stroke-width="1"/><rect x="595.05" y="371.77" width="9" height="9" fill="#0000b4" stroke="#a8a8a8" stroke-opacity="0.75" stroke-width="1"/><rect x="588.09" y="372.87" width="9" height="9" fill="#0000b4" stroke="#a8a8a8" stroke-opacity="0.75" stroke-width="1"/><rect x="581.27" y="374.70" width="9" height="9" fill="#0000b4" stroke="#a8a8a8" stroke-opacity="0.75" stroke-width="1"/><rect x="574.69" y="377.23" width="9" height="9" fill="#0000b4" stroke="#a8a8a8" stroke-opacity="0.75" stroke-width="1"/><rect x="568.40" y="380.43" width="9" height="9" fill="#0000b4" stroke="#a8a8a8" stroke-opacity="0.75" stroke-width="1"/><rect x="562.48" y="384.27" width="9" height="9" fill="#0000b4" stroke="#a8a8a8" stroke-opacity="0.75" stroke-width="1"/><rect x="557.00" y="388.71" width="9" height="9" fill="#0000b4" stroke="#a8a8a8" stroke-opacity="0.75" stroke-width="1"/><rect x="552.01" y="393.70" width="9" height="9" fill="#0000b4" stroke="#a8a8a8" stroke-opacity="0.75" stroke-width="1"/><rect x="547.57" y="399.18" width="9" height="9" fill="#0000b4" stroke="#a8a8a8" stroke-opacity="0.75" stroke-width="1"/><rect x="543.73" y="405.10" width="9" height="9" fill="#0000b4" stroke="#a8a8a8" stroke-opacity="0.75" stroke-width="1"/><rect x="540.53" y="411.39" width="9" height="9" fill="#0000b4" stroke="#a8a8a8" stroke-opacity="0.75" stroke-width="1"/><rect x="538.00" y="417.97" width="9" height="9" fill="#0000b4" stroke="#a8a8a8" stroke-opacity="0.75" stroke-width="1"/><rect x="536.17" y="424.79" width="9" height="9" fill="#0000b4" stroke="#a8a8a8" stroke-opacity="0.75" stroke-width="1"/><rect x="535.07" y="431.75" width="9" height="9" fill="#0000b4" stroke="#a8a8a8" stroke-opacity="0.75" stroke-width="1"/><rect x="534.70" y="438.80" width="9" height="9" fill="#0000b4" stroke="#a8a8a8" stroke-opacity="0.75" stroke-width="1"/><rect x="535.07" y="445.85" width="9" height="9" fill="#0000b4" stroke="#a8a8a8" stroke-opacity="0.75" stroke-width="1"/><rect x="536.17" y="452.81" width="9" height="9" fill="#0000b4" stroke="#a8a8a8" stroke-opacity="0.75" stroke-width="1"/><rect x="538.00" y="459.63" width="9" height="9" fill="#0000b4" stroke="#a8a8a8" stroke-opacity="0.75" stroke-width="1"/><rect x="540.53" y="466.21" width="9" height="9" fill="#0000b4" stroke="#a8a8a8" stroke-opacity="0.75" stroke-width="1"/><rect x="543.73" y="472.50" width="9" height="9" fill="#0000b4" stroke="#a8a8a8" stroke-opacity="0.75" stroke-width="1"/><rect x="547.57" y="478.42" width="9" height="9" fill="#0000b4" stroke="#a8a8a8" stroke-opacity="0.75" stroke-width="1"/><rect x="552.01" y="483.90" width="9" height="9" fill="#0000b4" stroke="#a8a8a8" stroke-opacity="0.75" stroke-width="1"/><rect x="557.00" y="488.89" width="9" height="9" fill="#0000b4" stroke="#a8a8a8" stroke-opacity="0.75" stroke-width="1"/><rect x="562.48" y="493.33" width="9" height="9" fill="#0000b4" stroke="#a8a8a8" stroke-opacity="0.75" stroke-width="1"/><rect x="568.40" y="497.17" width="9" height="9" fill="#0000b4" stroke="#a8a8a8" stroke-opacity="0.75" stroke-width="1"/><rect x="574.69" y="500.37" width="9" height="9" fill="#0000b4" stroke="#a8a8a8" stroke-opacity="0.75" stroke-width="1"/><rect x="581.27" y="502.90" width="9" height="9" fill="#0000b4" stroke="#a8a8a8" stroke-opacity="0.75" stroke-width="1"/><rect x="588.09" y="504.73" width="9" height="9" fill="#0000b4" stroke="#a8a8a8" stroke-opacity="0.75" stroke-width="1"/><rect x="595.05" y="505.83" width="9" height="9" fill="#0000b4" stroke="#a8a8a8" stroke-opacity="0.75" stroke-width="1"/><rect x="602.10" y="506.20" width="9" height="9" fill="#0000b4" stroke="#a8a8a8" stroke-opacity="0.75" stroke-width="1"/><rect x="609.15" y="505.83" width="9" height="9" fill="#0000b4" stroke="#a8a8a8" stroke-opacity="0.75" stroke-width="1"/><rect x="616.11" y="504.73" width="9" height="9" fill="#0000b4" stroke="#a8a8a8" stroke-opacity="0.75" stroke-width="1"/><rect x="622.93" y="502.90" width="9" height="9" fill="#0000b4" stroke="#a8a8a8" stroke-opacity="0.75" stroke-width="1"/><rect x="629.51" y="500.37" width="9" height="9" fill="#0000b4" stroke="#a8a8a8" stroke-opacity="0.75" stroke-width="1"/><rect x="635.80" y="497.17" width="9" height="9" fill="#0000b4" stroke="#a8a8a8" stroke-opacity="0.75" stroke-width="1"/><rect x="641.72" y="493.33" width="9" height="9" fill="#0000b4" stroke="#a8a8a8" stroke-opacity="0.75" stroke-width="1"/><rect x="647.20" y="488.89" width="9" height="9" fill="#0000b4" stroke="#a8a8a8" stroke-opacity="0.75" stroke-width="1"/><rect x="652.19" y="483.90" width="9" height="9" fill="#0000b4" stroke="#a8a8a8" stroke-opacity="0.75" stroke-width="1"/><rect x="656.63" y="478.42" width="9" height="9" fill="#0000b4" stroke="#a8a8a8" stroke-opacity="0.75" stroke-width="1"/><rect x="660.47" y="472.50" width="9" height="9" fill="#0000b4" stroke="#a8a8a8" stroke-opacity="0.75" stroke-width="1"/><rect x="663.67" y="466.21" width="9" height="9" fill="#0000b4" stroke="#a8a8a8" stroke-opacity="0.75" stroke-width="1"/><rect x="666.20" y="459.63" width="9" height="9" fill="#0000b4" stroke="#a8a8a8" stroke-opacity="0.75" stroke-width="1"/><rect x="668.03" y="452.81" width="9" height="9" fill="#0000b4" stroke="#a8a8a8" stroke-opacity="0.75" stroke-width="1"/><rect x="669.13" y="445.85" width="9" height="9" fill="#0000b4" stroke="#a8a8a8" stroke-opacity="0.75" stroke-width="1"/><rect x="669.50" y="438.80" width="9" height="9" fill="#0000b4" stroke="#a8a8a8" stroke-opacity="0.75" stroke-width="1"/><rect x="669.13" y="431.75" width="9" height="9" fill="#0000b4" stroke="#a8a8a8" stroke-opacity="0.75" stroke-width="1"/><rect x="668.03" y="424.79" width="9" height="9" fill="#0000b4" stroke="#a8a8a8" stroke-opacity="0.75" stroke-width="1"/><rect x="666.20" y="417.97" width="9" height="9" fill="#0000b4" stroke="#a8a8a8" stroke-opacity="0.75" stroke-width="1"/><rect x="663.67" y="411.39" width="9" height="9" fill="#0000b4" stroke="#a8a8a8" stroke-opacity="0.75" stroke-width="1"/><rect x="660.47" y="405.10" width="9" height="9" fill="#0000b4" stroke="#a8a8a8" stroke-opacity="0.75" stroke-width="1"/><rect x="656.63" y="399.18" width="9" height="9" fill="#0000b4" stroke="#a8a8a8" stroke-opacity="0.75" stroke-width="1"/><rect x="652.19" y="393.70" width="9" height="9" fill="#0000b4" stroke="#a8a8a8" stroke-opacity="0.75" stroke-width="1"/><rect x="647.20" y="388.71" width="9" height="9" fill="#0000b4" stroke="#a8a8a8" stroke-opacity="0.75" stroke-width="1"/><rect x="641.72" y="384.27" width="9" height="9" fill="#0000b4" stroke="#a8a8a8" stroke-opacity="0.75" stroke-width="1"/><rect x="635.80" y="380.43" width="9" height="9" fill="#0000b4" stroke="#a8a8a8" stroke-opacity="0.75" stroke-width="1"/><rect x="629.51" y="377.23" width="9" height="9" fill="#0000b4" stroke="#a8a8a8" stroke-opacity="0.75" stroke-width="1"/><rect x="622.93" y="374.70" width="9" height="9" fill="#0000b4" stroke="#a8a8a8" stroke-opacity="0.75" stroke-width="1"/><rect x="616.11" y="372.87" width="9" height="9" fill="#0000b4" stroke="#a8a8a8" stroke-opacity="0.75" stroke-width="1"/><rect x="609.15" y="371.77" width="9" height="9" fill="#0000b4" stroke="#a8a8a8" stroke-opacity="0.75" stroke-width="1"/><rect x="602.10" y="382.50" width="9" height="9" fill="#c8001e" stroke="#a8a8a8" stroke-opacity="0.75" stroke-width="1"/><rect x="596.22" y="382.81" width="9" height="9" fill="#c8001e" stroke="#a8a8a8" stroke-opacity="0.75" stroke-width="1"/><rect x="590.39" y="383.73" width="9" height="9" fill="#c8001e" stroke="#a8a8a8" stroke-opacity="0.75" stroke-width="1"/><rect x="584.70" y="385.26" width="9" height="9" fill="#c8001e" stroke="#a8a8a8" stroke-opacity="0.75" stroke-width="1"/><rect x="579.20" y="387.37" width="9" height="9" fill="#c8001e" stroke="#a8a8a8" stroke-opacity="0.75" stroke-width="1"/><rect x="573.95" y="390.04" width="9" height="9" fill="#c8001e" stroke="#a8a8a8" stroke-opacity="0.75" stroke-width="1"/><rect x="569.01" y="393.25" width="9" height="9" fill="#c8001e" stroke="#a8a8a8" stroke-opacity="0.75" stroke-width="1"/><rect x="564.43" y="396.96" width="9" height="9" fill="#c8001e" stroke="#a8a8a8" stroke-opacity="0.75" stroke-width="1"/><rect x="560.26" y="401.13" width="9" height="9" fill="#c8001e" stroke="#a8a8a8" stroke-opacity="0.75" stroke-width="1"/><rect x="556.55" y="405.71" width="9" height="9" fill="#c8001e" stroke="#a8a8a8" stroke-opacity="0.75" stroke-width="1"/><rect x="553.34" y="410.65" width="9" height="9" fill="#c8001e" stroke="#a8a8a8" stroke-opacity="0.75" stroke-width="1"/><rect x="550.67" y="415.90" width="9" height="9" fill="#c8001e" stroke="#a8a8a8" stroke-opacity="0.75" stroke-width="1"/><rect x="548.56" y="421.40" width="9" height="9" fill="#c8001e" stroke="#a8a8a8" stroke-opacity="0.75" stroke-width="1"/><rect x="547.03" y="427.09" width="9" height="9" fill="#c8001e" stroke="#a8a8a8" stroke-opacity="0.75" stroke-width="1"/><rect x="546.11" y="432.92" width="9" height="9" fill="#c8001e" stroke="#a8a8a8" stroke-opacity="0.75" stroke-width="1"/><rect x="545.80" y="438.80" width="9" height="9" fill="#c8001e" stroke="#a8a8a8" stroke-opacity="0.75" stroke-width="1"/><rect x="546.11" y="444.68" width="9" height="9" fill="#c8001e" stroke="#a8a8a8" stroke-opacity="0.75" stroke-width="1"/><rect x="547.03" y="450.51" width="9" height="9" fill="#c8001e" stroke="#a8a8a8" stroke-opacity="0.75" stroke-width="1"/><rect x="548.56" y="456.20" width="9" height="9" fill="#c8001e" stroke="#a8a8a8" stroke-opacity="0.75" stroke-width="1"/><rect x="550.67" y="461.70" width="9" height="9" fill="#c8001e" stroke="#a8a8a8" stroke-opacity="0.75" stroke-width="1"/><rect x="553.34" y="466.95" width="9" height="9" fill="#c8001e" stroke="#a8a8a8" stroke-opacity="0.75" stroke-width="1"/><rect x="556.55" y="471.89" width="9" height="9" fill="#c8001e" stroke="#a8a8a8" stroke-opacity="0.75" stroke-width="1"/><rect x="560.26" y="476.47" width="9" height="9" fill="#c8001e" stroke="#a8a8a8" stroke-opacity="0.75" stroke-width="1"/><rect x="564.43" y="480.64" width="9" height="9" fill="#c8001e" stroke="#a8a8a8" stroke-opacity="0.75" stroke-width="1"/><rect x="569.01" y="484.35" width="9" height="9" fill="#c8001e" stroke="#a8a8a8" stroke-opacity="0.75" stroke-width="1"/><rect x="573.95" y="487.56" width="9" height="9" fill="#c8001e" stroke="#a8a8a8" stroke-opacity="0.75" stroke-width="1"/><rect x="579.20" y="490.23" width="9" height="9" fill="#c8001e" stroke="#a8a8a8" stroke-opacity="0.75" stroke-width="1"/><rect x="584.70" y="492.34" width="9" height="9" fill="#c8001e" stroke="#a8a8a8" stroke-opacity="0.75" stroke-width="1"/><rect x="590.39" y="493.87" width="9" height="9" fill="#c8001e" stroke="#a8a8a8" stroke-opacity="0.75" stroke-width="1"/><rect x="596.22" y="494.79" width="9" height="9" fill="#c8001e" stroke="#a8a8a8" stroke-opacity="0.75" stroke-width="1"/><rect x="602.10" y="495.10" width="9" height="9" fill="#c8001e" stroke="#a8a8a8" stroke-opacity="0.75" stroke-width="1"/><rect x="607.98" y="494.79" width="9" height="9" fill="#c8001e" stroke="#a8a8a8" stroke-opacity="0.75" stroke-width="1"/><rect x="613.81" y="493.87" width="9" height="9" fill="#c8001e" stroke="#a8a8a8" stroke-opacity="0.75" stroke-width="1"/><rect x="619.50" y="492.34" width="9" height="9" fill="#c8001e" stroke="#a8a8a8" stroke-opacity="0.75" stroke-width="1"/><rect x="625.00" y="490.23" width="9" height="9" fill="#c8001e" stroke="#a8a8a8" stroke-opacity="0.75" stroke-width="1"/><rect x="630.25" y="487.56" width="9" height="9" fill="#c8001e" stroke="#a8a8a8" stroke-opacity="0.75" stroke-width="1"/><rect x="635.19" y="484.35" width="9" height="9" fill="#c8001e" stroke="#a8a8a8" stroke-opacity="0.75" stroke-width="1"/><rect x="639.77" y="480.64" width="9" height="9" fill="#c8001e" stroke="#a8a8a8" stroke-opacity="0.75" stroke-width="1"/><rect x="643.94" y="476.47" width="9" height="9" fill="#c8001e" stroke="#a8a8a8" stroke-opacity="0.75" stroke-width="1"/><rect x="647.65" y="471.89" width="9" height="9" fill="#c8001e" stroke="#a8a8a8" stroke-opacity="0.75" stroke-width="1"/><rect x="650.86" y="466.95" width="9" height="9" fill="#c8001e" stroke="#a8a8a8" stroke-opacity="0.75" stroke-width="1"/><rect x="653.53" y="461.70" width="9" height="9" fill="#c8001e" stroke="#a8a8a8" stroke-opacity="0.75" stroke-width="1"/><rect x="655.64" y="456.20" width="9" height="9" fill="#c8001e" stroke="#a8a8a8" stroke-opacity="0.75" stroke-width="1"/><rect x="657.17" y="450.51" width="9" height="9" fill="#c8001e" stroke="#a8a8a8" stroke-opacity="0.75" stroke-width="1"/><rect x="658.09" y="444.68" width="9" height="9" fill="#c8001e" stroke="#a8a8a8" stroke-opacity="0.75" stroke-width="1"/><rect x="658.40" y="438.80" width="9" height="9" fill="#c8001e" stroke="#a8a8a8" stroke-opacity="0.75" stroke-width="1"/><rect x="658.09" y="432.92" width="9" height="9" fill="#c8001e" stroke="#a8a8a8" stroke-opacity="0.75" stroke-width="1"/><rect x="657.17" y="427.09" width="9" height="9" fill="#c8001e" stroke="#a8a8a8" stroke-opacity="0.75" stroke-width="1"/><rect x="655.64" y="421.40" width="9" height="9" fill="#c8001e" stroke="#a8a8a8" stroke-opacity="0.75" stroke-width="1"/><rect x="653.53" y="415.90" width="9" height="9" fill="#c8001e" stroke="#a8a8a8" stroke-opacity="0.75" stroke-width="1"/><rect x="650.86" y="410.65" width="9" height="9" fill="#c8001e" stroke="#a8a8a8" stroke-opacity="0.75" stroke-width="1"/><rect x="647.65" y="405.71" width="9" height="9" fill="#c8001e" stroke="#a8a8a8" stroke-opacity="0.75" stroke-width="1"/><rect x="643.94" y="401.13" width="9" height="9" fill="#c8001e" stroke="#a8a8a8" stroke-opacity="0.75" stroke-width="1"/><rect x="639.77" y="396.96" width="9" height="9" fill="#c8001e" stroke="#a8a8a8" stroke-opacity="0.75" stroke-width="1"/><rect x="635.19" y="393.25" width="9" height="9" fill="#c8001e" stroke="#a8a8a8" stroke-opacity="0.75" stroke-width="1"/><rect x="630.25" y="390.04" width="9" height="9" fill="#c8001e" stroke="#a8a8a8" stroke-opacity="0.75" stroke-width="1"/><rect x="625.00" y="387.37" width="9" height="9" fill="#c8001e" stroke="#a8a8a8" stroke-opacity="0.75" stroke-width="1"/><rect x="619.50" y="385.26" width="9" height="9" fill="#c8001e" stroke="#a8a8a8" stroke-opacity="0.75" stroke-width="1"/><rect x="613.81" y="383.73" width="9" height="9" fill="#c8001e" stroke="#a8a8a8" stroke-opacity="0.75" stroke-width="1"/><rect x="607.98" y="382.81" width="9" height="9" fill="#c8001e" stroke="#a8a8a8" stroke-opacity="0.75" stroke-width="1"/><rect x="602.10" y="276.80" width="9" height="9" fill="#0000b4" stroke="#a8a8a8" stroke-opacity="0.75" stroke-width="1"/><rect x="597.70" y="286.30" width="9" height="9" fill="#0000b4" stroke="#a8a8a8" stroke-opacity="0.75" stroke-width="1"/><rect x="606.50" y="286.30" width="9" height="9" fill="#0000b4" stroke="#a8a8a8" stroke-opacity="0.75" stroke-width="1"/><rect x="602.10" y="296.30" width="9" height="9" fill="#0000b4" stroke="#a8a8a8" stroke-opacity="0.75" stroke-width="1"/><rect x="618.62" y="281.67" width="9" height="9" fill="#0000b4" stroke="#a8a8a8" stroke-opacity="0.75" stroke-width="1"/><rect x="617.41" y="293.10" width="9" height="9" fill="#c8001e" stroke="#a8a8a8" stroke-opacity="0.75" stroke-width="1"/><rect x="634.95" y="284.25" width="9" height="9" fill="#0000b4" stroke="#a8a8a8" stroke-opacity="0.75" stroke-width="1"/><rect x="632.56" y="295.50" width="9" height="9" fill="#c8001e" stroke="#a8a8a8" stroke-opacity="0.75" stroke-width="1"/><rect x="650.92" y="288.53" width="9" height="9" fill="#0000b4" stroke="#a8a8a8" stroke-opacity="0.75" stroke-width="1"/><rect x="647.37" y="299.47" width="9" height="9" fill="#c8001e" stroke="#a8a8a8" stroke-opacity="0.75" stroke-width="1"/><rect x="666.36" y="294.46" width="9" height="9" fill="#0000b4" stroke="#a8a8a8" stroke-opacity="0.75" stroke-width="1"/><rect x="661.69" y="304.97" width="9" height="9" fill="#c8001e" stroke="#a8a8a8" stroke-opacity="0.75" stroke-width="1"/><rect x="683.10" y="298.50" width="9" height="9" fill="#0000b4" stroke="#a8a8a8" stroke-opacity="0.75" stroke-width="1"/><rect x="674.54" y="304.53" width="9" height="9" fill="#0000b4" stroke="#a8a8a8" stroke-opacity="0.75" stroke-width="1"/><rect x="682.16" y="308.93" width="9" height="9" fill="#0000b4" stroke="#a8a8a8" stroke-opacity="0.75" stroke-width="1"/><rect x="673.35" y="315.39" width="9" height="9" fill="#0000b4" stroke="#a8a8a8" stroke-opacity="0.75" stroke-width="1"/><rect x="694.97" y="310.98" width="9" height="9" fill="#0000b4" stroke="#a8a8a8" stroke-opacity="0.75" stroke-width="1"/><rect x="688.21" y="320.28" width="9" height="9" fill="#c8001e" stroke="#a8a8a8" stroke-opacity="0.75" stroke-width="1"/><rect x="707.82" y="321.38" width="9" height="9" fill="#0000b4" stroke="#a8a8a8" stroke-opacity="0.75" stroke-width="1"/><rect x="700.13" y="329.93" width="9" height="9" fill="#c8001e" stroke="#a8a8a8" stroke-opacity="0.75" stroke-width="1"/><rect x="719.52" y="333.08" width="9" height="9" fill="#0000b4" stroke="#a8a8a8" stroke-opacity="0.75" stroke-width="1"/><rect x="710.97" y="340.77" width="9" height="9" fill="#c8001e" stroke="#a8a8a8" stroke-opacity="0.75" stroke-width="1"/><rect x="729.92" y="345.93" width="9" height="9" fill="#0000b4" stroke="#a8a8a8" stroke-opacity="0.75" stroke-width="1"/><rect x="720.62" y="352.69" width="9" height="9" fill="#c8001e" stroke="#a8a8a8" stroke-opacity="0.75" stroke-width="1"/><rect x="742.40" y="357.80" width="9" height="9" fill="#0000b4" stroke="#a8a8a8" stroke-opacity="0.75" stroke-width="1"/><rect x="731.97" y="358.74" width="9" height="9" fill="#0000b4" stroke="#a8a8a8" stroke-opacity="0.75" stroke-width="1"/><rect x="736.37" y="366.36" width="9" height="9" fill="#0000b4" stroke="#a8a8a8" stroke-opacity="0.75" stroke-width="1"/><rect x="725.51" y="367.55" width="9" height="9" fill="#0000b4" stroke="#a8a8a8" stroke-opacity="0.75" stroke-width="1"/><rect x="746.44" y="374.54" width="9" height="9" fill="#0000b4" stroke="#a8a8a8" stroke-opacity="0.75" stroke-width="1"/><rect x="735.93" y="379.21" width="9" height="9" fill="#c8001e" stroke="#a8a8a8" stroke-opacity="0.75" stroke-width="1"/><rect x="752.37" y="389.98" width="9" height="9" fill="#0000b4" stroke="#a8a8a8" stroke-opacity="0.75" stroke-width="1"/><rect x="741.43" y="393.53" width="9" height="9" fill="#c8001e" stroke="#a8a8a8" stroke-opacity="0.75" stroke-width="1"/><rect x="756.65" y="405.95" width="9" height="9" fill="#0000b4" stroke="#a8a8a8" stroke-opacity="0.75" stroke-width="1"/><rect x="745.40" y="408.34" width="9" height="9" fill="#c8001e" stroke="#a8a8a8" stroke-opacity="0.75" stroke-width="1"/><rect x="759.23" y="422.28" width="9" height="9" fill="#0000b4" stroke="#a8a8a8" stroke-opacity="0.75" stroke-width="1"/><rect x="747.80" y="423.49" width="9" height="9" fill="#c8001e" stroke="#a8a8a8" stroke-opacity="0.75" stroke-width="1"/><rect x="764.10" y="438.80" width="9" height="9" fill="#0000b4" stroke="#a8a8a8" stroke-opacity="0.75" stroke-width="1"/><rect x="754.60" y="434.40" width="9" height="9" fill="#0000b4" stroke="#a8a8a8" stroke-opacity="0.75" stroke-width="1"/><rect x="754.60" y="443.20" width="9" height="9" fill="#0000b4" stroke="#a8a8a8" stroke-opacity="0.75" stroke-width="1"/><rect x="744.60" y="438.80" width="9" height="9" fill="#0000b4" stroke="#a8a8a8" stroke-opacity="0.75" stroke-width="1"/><rect x="759.23" y="455.32" width="9" height="9" fill="#0000b4" stroke="#a8a8a8" stroke-opacity="0.75" stroke-width="1"/><rect x="747.80" y="454.11" width="9" height="9" fill="#c8001e" stroke="#a8a8a8" stroke-opacity="0.75" stroke-width="1"/><rect x="756.65" y="471.65" width="9" height="9" fill="#0000b4" stroke="#a8a8a8" stroke-opacity="0.75" stroke-width="1"/><rect x="745.40" y="469.26" width="9" height="9" fill="#c8001e" stroke="#a8a8a8" stroke-opacity="0.75" stroke-width="1"/><rect x="752.37" y="487.62" width="9" height="9" fill="#0000b4" stroke="#a8a8a8" stroke-opacity="0.75" stroke-width="1"/><rect x="741.43" y="484.07" width="9" height="9" fill="#c8001e" stroke="#a8a8a8" stroke-opacity="0.75" stroke-width="1"/><rect x="746.44" y="503.06" width="9" height="9" fill="#0000b4" stroke="#a8a8a8" stroke-opacity="0.75" stroke-width="1"/><rect x="735.93" y="498.39" width="9" height="9" fill="#c8001e" stroke="#a8a8a8" stroke-opacity="0.75" stroke-width="1"/><rect x="742.40" y="519.80" width="9" height="9" fill="#0000b4" stroke="#a8a8a8" stroke-opacity="0.75" stroke-width="1"/><rect x="736.37" y="511.24" width="9" height="9" fill="#0000b4" stroke="#a8a8a8" stroke-opacity="0.75" stroke-width="1"/><rect x="731.97" y="518.86" width="9" height="9" fill="#0000b4" stroke="#a8a8a8" stroke-opacity="0.75" stroke-width="1"/><rect x="725.51" y="510.05" width="9" height="9" fill="#0000b4" stroke="#a8a8a8" stroke-opacity="0.75" stroke-width="1"/><rect x="729.92" y="531.67" width="9" height="9" fill="#0000b4" stroke="#a8a8a8" stroke-opacity="0.75" stroke-width="1"/><rect x="720.62" y="524.91" width="9" height="9" fill="#c8001e" stroke="#a8a8a8" stroke-opacity="0.75" stroke-width="1"/><rect x="719.52" y="544.52" width="9" height="9" fill="#0000b4" stroke="#a8a8a8" stroke-opacity="0.75" stroke-width="1"/><rect x="710.97" y="536.83" width="9" height="9" fill="#c8001e" stroke="#a8a8a8" stroke-opacity="0.75" stroke-width="1"/><rect x="707.82" y="556.22" width="9" height="9" fill="#0000b4" stroke="#a8a8a8" stroke-opacity="0.75" stroke-width="1"/><rect x="700.13" y="547.67" width="9" height="9" fill="#c8001e" stroke="#a8a8a8" stroke-opacity="0.75" stroke-width="1"/><rect x="694.97" y="566.62" width="9" height="9" fill="#0000b4" stroke="#a8a8a8" stroke-opacity="0.75" stroke-width="1"/><rect x="688.21" y="557.32" width="9" height="9" fill="#c8001e" stroke="#a8a8a8" stroke-opacity="0.75" stroke-width="1"/><rect x="683.10" y="579.10" width="9" height="9" fill="#0000b4" stroke="#a8a8a8" stroke-opacity="0.75" stroke-width="1"/><rect x="682.16" y="568.67" width="9" height="9" fill="#0000b4" stroke="#a8a8a8" stroke-opacity="0.75" stroke-width="1"/><rect x="674.54" y="573.07" width="9" height="9" fill="#0000b4" stroke="#a8a8a8" stroke-opacity="0.75" stroke-width="1"/><rect x="673.35" y="562.21" width="9" height="9" fill="#0000b4" stroke="#a8a8a8" stroke-opacity="0.75" stroke-width="1"/><rect x="666.36" y="583.14" width="9" height="9" fill="#0000b4" stroke="#a8a8a8" stroke-opacity="0.75" stroke-width="1"/><rect x="661.69" y="572.63" width="9" height="9" fill="#c8001e" stroke="#a8a8a8" stroke-opacity="0.75" stroke-width="1"/><rect x="650.92" y="589.07" width="9" height="9" fill="#0000b4" stroke="#a8a8a8" stroke-opacity="0.75" stroke-width="1"/><rect x="647.37" y="578.13" width="9" height="9" fill="#c8001e" stroke="#a8a8a8" stroke-opacity="0.75" stroke-width="1"/><rect x="634.95" y="593.35" width="9" height="9" fill="#0000b4" stroke="#a8a8a8" stroke-opacity="0.75" stroke-width="1"/><rect x="632.56" y="582.10" width="9" height="9" fill="#c8001e" stroke="#a8a8a8" stroke-opacity="0.75" stroke-width="1"/><rect x="618.62" y="595.93" width="9" height="9" fill="#0000b4" stroke="#a8a8a8" stroke-opacity="0.75" stroke-width="1"/><rect x="617.41" y="584.50" width="9" height="9" fill="#c8001e" stroke="#a8a8a8" stroke-opacity="0.75" stroke-width="1"/><rect x="602.10" y="600.80" width="9" height="9" fill="#0000b4" stroke="#a8a8a8" stroke-opacity="0.75" stroke-width="1"/><rect x="606.50" y="591.30" width="9" height="9" fill="#0000b4" stroke="#a8a8a8" stroke-opacity="0.75" stroke-width="1"/><rect x="597.70" y="591.30" width="9" height="9" fill="#0000b4" stroke="#a8a8a8" stroke-opacity="0.75" stroke-width="1"/><rect x="602.10" y="581.30" width="9" height="9" fill="#0000b4" stroke="#a8a8a8" stroke-opacity="0.75" stroke-width="1"/><rect x="585.58" y="595.93" width="9" height="9" fill="#0000b4" stroke="#a8a8a8" stroke-opacity="0.75" stroke-width="1"/><rect x="586.79" y="584.50" width="9" height="9" fill="#c8001e" stroke="#a8a8a8" stroke-opacity="0.75" stroke-width="1"/><rect x="569.25" y="593.35" width="9" height="9" fill="#0000b4" stroke="#a8a8a8" stroke-opacity="0.75" stroke-width="1"/><rect x="571.64" y="582.10" width="9" height="9" fill="#c8001e" stroke="#a8a8a8" stroke-opacity="0.75" stroke-width="1"/><rect x="553.28" y="589.07" width="9" height="9" fill="#0000b4" stroke="#a8a8a8" stroke-opacity="0.75" stroke-width="1"/><rect x="556.83" y="578.13" width="9" height="9" fill="#c8001e" stroke="#a8a8a8" stroke-opacity="0.75" stroke-width="1"/><rect x="537.84" y="583.14" width="9" height="9" fill="#0000b4" stroke="#a8a8a8" stroke-opacity="0.75" stroke-width="1"/><rect x="542.51" y="572.63" width="9" height="9" fill="#c8001e" stroke="#a8a8a8" stroke-opacity="0.75" stroke-width="1"/><rect x="521.10" y="579.10" width="9" height="9" fill="#0000b4" stroke="#a8a8a8" stroke-opacity="0.75" stroke-width="1"/><rect x="529.66" y="573.07" width="9" height="9" fill="#0000b4" stroke="#a8a8a8" stroke-opacity="0.75" stroke-width="1"/><rect x="522.04" y="568.67" width="9" height="9" fill="#0000b4" stroke="#a8a8a8" stroke-opacity="0.75" stroke-width="1"/><rect x="530.85" y="562.21" width="9" height="9" fill="#0000b4" stroke="#a8a8a8" stroke-opacity="0.75" stroke-width="1"/><rect x="509.23" y="566.62" width="9" height="9" fill="#0000b4" stroke="#a8a8a8" stroke-opacity="0.75" stroke-width="1"/><rect x="515.99" y="557.32" width="9" height="9" fill="#c8001e" stroke="#a8a8a8" stroke-opacity="0.75" stroke-width="1"/><rect x="496.38" y="556.22" width="9" height="9" fill="#0000b4" stroke="#a8a8a8" stroke-opacity="0.75" stroke-width="1"/><rect x="504.07" y="547.67" width="9" height="9" fill="#c8001e" stroke="#a8a8a8" stroke-opacity="0.75" stroke-width="1"/><rect x="484.68" y="544.52" width="9" height="9" fill="#0000b4" stroke="#a8a8a8" stroke-opacity="0.75" stroke-width="1"/><rect x="493.23" y="536.83" width="9" height="9" fill="#c8001e" stroke="#a8a8a8" stroke-opacity="0.75" stroke-width="1"/><rect x="474.28" y="531.67" width="9" height="9" fill="#0000b4" stroke="#a8a8a8" stroke-opacity="0.75" stroke-width="1"/><rect x="483.58" y="524.91" width="9" height="9" fill="#c8001e" stroke="#a8a8a8" stroke-opacity="0.75" stroke-width="1"/><rect x="461.80" y="519.80" width="9" height="9" fill="#0000b4" stroke="#a8a8a8" stroke-opacity="0.75" stroke-width="1"/><rect x="472.23" y="518.86" width="9" height="9" fill="#0000b4" stroke="#a8a8a8" stroke-opacity="0.75" stroke-width="1"/><rect x="467.83" y="511.24" width="9" height="9" fill="#0000b4" stroke="#a8a8a8" stroke-opacity="0.75" stroke-width="1"/><rect x="478.69" y="510.05" width="9" height="9" fill="#0000b4" stroke="#a8a8a8" stroke-opacity="0.75" stroke-width="1"/><rect x="457.76" y="503.06" width="9" height="9" fill="#0000b4" stroke="#a8a8a8" stroke-opacity="0.75" stroke-width="1"/><rect x="468.27" y="498.39" width="9" height="9" fill="#c8001e" stroke="#a8a8a8" stroke-opacity="0.75" stroke-width="1"/><rect x="451.83" y="487.62" width="9" height="9" fill="#0000b4" stroke="#a8a8a8" stroke-opacity="0.75" stroke-width="1"/><rect x="462.77" y="484.07" width="9" height="9" fill="#c8001e" stroke="#a8a8a8" stroke-opacity="0.75" stroke-width="1"/><rect x="447.55" y="471.65" width="9" height="9" fill="#0000b4" stroke="#a8a8a8" stroke-opacity="0.75" stroke-width="1"/><rect x="458.80" y="469.26" width="9" height="9" fill="#c8001e" stroke="#a8a8a8" stroke-opacity="0.75" stroke-width="1"/><rect x="444.97" y="455.32" width="9" height="9" fill="#0000b4" stroke="#a8a8a8" stroke-opacity="0.75" stroke-width="1"/><rect x="456.40" y="454.11" width="9" height="9" fill="#c8001e" stroke="#a8a8a8" stroke-opacity="0.75" stroke-width="1"/><rect x="440.10" y="438.80" width="9" height="9" fill="#0000b4" stroke="#a8a8a8" stroke-opacity="0.75" stroke-width="1"/><rect x="449.60" y="443.20" width="9" height="9" fill="#0000b4" stroke="#a8a8a8" stroke-opacity="0.75" stroke-width="1"/><rect x="449.60" y="434.40" width="9" height="9" fill="#0000b4" stroke="#a8a8a8" stroke-opacity="0.75" stroke-width="1"/><rect x="459.60" y="438.80" width="9" height="9" fill="#0000b4" stroke="#a8a8a8" stroke-opacity="0.75" stroke-width="1"/><rect x="444.97" y="422.28" width="9" height="9" fill="#0000b4" stroke="#a8a8a8" stroke-opacity="0.75" stroke-width="1"/><rect x="456.40" y="423.49" width="9" height="9" fill="#c8001e" stroke="#a8a8a8" stroke-opacity="0.75" stroke-width="1"/><rect x="447.55" y="405.95" width="9" height="9" fill="#0000b4" stroke="#a8a8a8" stroke-opacity="0.75" stroke-width="1"/><rect x="458.80" y="408.34" width="9" height="9" fill="#c8001e" stroke="#a8a8a8" stroke-opacity="0.75" stroke-width="1"/><rect x="451.83" y="389.98" width="9" height="9" fill="#0000b4" stroke="#a8a8a8" stroke-opacity="0.75" stroke-width="1"/><rect x="462.77" y="393.53" width="9" height="9" fill="#c8001e" stroke="#a8a8a8" stroke-opacity="0.75" stroke-width="1"/><rect x="457.76" y="374.54" width="9" height="9" fill="#0000b4" stroke="#a8a8a8" stroke-opacity="0.75" stroke-width="1"/><rect x="468.27" y="379.21" width="9" height="9" fill="#c8001e" stroke="#a8a8a8" stroke-opacity="0.75" stroke-width="1"/><rect x="461.80" y="357.80" width="9" height="9" fill="#0000b4" stroke="#a8a8a8" stroke-opacity="0.75" stroke-width="1"/><rect x="467.83" y="366.36" width="9" height="9" fill="#0000b4" stroke="#a8a8a8" stroke-opacity="0.75" stroke-width="1"/><rect x="472.23" y="358.74" width="9" height="9" fill="#0000b4" stroke="#a8a8a8" stroke-opacity="0.75" stroke-width="1"/><rect x="478.69" y="367.55" width="9" height="9" fill="#0000b4" stroke="#a8a8a8" stroke-opacity="0.75" stroke-width="1"/><rect x="474.28" y="345.93" width="9" height="9" fill="#0000b4" stroke="#a8a8a8" stroke-opacity="0.75" stroke-width="1"/><rect x="483.58" y="352.69" width="9" height="9" fill="#c8001e" stroke="#a8a8a8" stroke-opacity="0.75" stroke-width="1"/><rect x="484.68" y="333.08" width="9" height="9" fill="#0000b4" stroke="#a8a8a8" stroke-opacity="0.75" stroke-width="1"/><rect x="493.23" y="340.77" width="9" height="9" fill="#c8001e" stroke="#a8a8a8" stroke-opacity="0.75" stroke-width="1"/><rect x="496.38" y="321.38" width="9" height="9" fill="#0000b4" stroke="#a8a8a8" stroke-opacity="0.75" stroke-width="1"/><rect x="504.07" y="329.93" width="9" height="9" fill="#c8001e" stroke="#a8a8a8" stroke-opacity="0.75" stroke-width="1"/><rect x="509.23" y="310.98" width="9" height="9" fill="#0000b4" stroke="#a8a8a8" stroke-opacity="0.75" stroke-width="1"/><rect x="515.99" y="320.28" width="9" height="9" fill="#c8001e" stroke="#a8a8a8" stroke-opacity="0.75" stroke-width="1"/><rect x="521.10" y="298.50" width="9" height="9" fill="#0000b4" stroke="#a8a8a8" stroke-opacity="0.75" stroke-width="1"/><rect x="522.04" y="308.93" width="9" height="9" fill="#0000b4" stroke="#a8a8a8" stroke-opacity="0.75" stroke-width="1"/><rect x="529.66" y="304.53" width="9" height="9" fill="#0000b4" stroke="#a8a8a8" stroke-opacity="0.75" stroke-width="1"/><rect x="530.85" y="315.39" width="9" height="9" fill="#0000b4" stroke="#a8a8a8" stroke-opacity="0.75" stroke-width="1"/><rect x="537.84" y="294.46" width="9" height="9" fill="#0000b4" stroke="#a8a8a8" stroke-opacity="0.75" stroke-width="1"/><rect x="542.51" y="304.97" width="9" height="9" fill="#c8001e" stroke="#a8a8a8" stroke-opacity="0.75" stroke-width="1"/><rect x="553.28" y="288.53" width="9" height="9" fill="#0000b4" stroke="#a8a8a8" stroke-opacity="0.75" stroke-width="1"/><rect x="556.83" y="299.47" width="9" height="9" fill="#c8001e" stroke="#a8a8a8" stroke-opacity="0.75" stroke-width="1"/><rect x="569.25" y="284.25" width="9" height="9" fill="#0000b4" stroke="#a8a8a8" stroke-opacity="0.75" stroke-width="1"/><rect x="571.64" y="295.50" width="9" height="9" fill="#c8001e" stroke="#a8a8a8" stroke-opacity="0.75" stroke-width="1"/><rect x="585.58" y="281.67" width="9" height="9" fill="#0000b4" stroke="#a8a8a8" stroke-opacity="0.75" stroke-width="1"/><rect x="586.79" y="293.10" width="9" height="9" fill="#c8001e" stroke="#a8a8a8" stroke-opacity="0.75" stroke-width="1"/><rect x="663.25" y="332.89" width="9" height="9" fill="#0000b4" stroke="#a8a8a8" stroke-opacity="0.75" stroke-width="1"/><rect x="708.01" y="377.65" width="9" height="9" fill="#0000b4" stroke="#a8a8a8" stroke-opacity="0.75" stroke-width="1"/><rect x="724.40" y="438.80" width="9" height="9" fill="#0000b4" stroke="#a8a8a8" stroke-opacity="0.75" stroke-width="1"/><rect x="708.01" y="499.95" width="9" height="9" fill="#0000b4" stroke="#a8a8a8" stroke-opacity="0.75" stroke-width="1"/><rect x="663.25" y="544.71" width="9" height="9" fill="#0000b4" stroke="#a8a8a8" stroke-opacity="0.75" stroke-width="1"/><rect x="602.10" y="561.10" width="9" height="9" fill="#0000b4" stroke="#a8a8a8" stroke-opacity="0.75" stroke-width="1"/><rect x="540.95" y="544.71" width="9" height="9" fill="#0000b4" stroke="#a8a8a8" stroke-opacity="0.75" stroke-width="1"/><rect x="496.19" y="499.95" width="9" height="9" fill="#0000b4" stroke="#a8a8a8" stroke-opacity="0.75" stroke-width="1"/><rect x="479.80" y="438.80" width="9" height="9" fill="#0000b4" stroke="#a8a8a8" stroke-opacity="0.75" stroke-width="1"/><rect x="496.19" y="377.65" width="9" height="9" fill="#0000b4" stroke="#a8a8a8" stroke-opacity="0.75" stroke-width="1"/><rect x="540.95" y="332.89" width="9" height="9" fill="#0000b4" stroke="#a8a8a8" stroke-opacity="0.75" stroke-width="1"/><rect x="602.10" y="316.50" width="9" height="9" fill="#0000b4" stroke="#a8a8a8" stroke-opacity="0.75" stroke-width="1"/><rect x="607.00" y="438.80" width="9" height="9" fill="#0a86b6" stroke="#a8a8a8" stroke-opacity="0.75" stroke-width="1"/><rect x="602.10" y="433.90" width="9" height="9" fill="#0a86b6" stroke="#a8a8a8" stroke-opacity="0.75" stroke-width="1"/><rect x="597.20" y="438.80" width="9" height="9" fill="#0a86b6" stroke="#a8a8a8" stroke-opacity="0.75" stroke-width="1"/><rect x="602.10" y="443.70" width="9" height="9" fill="#0a86b6" stroke="#a8a8a8" stroke-opacity="0.75" stroke-width="1"/><g stroke="#b00000" stroke-width="1.1" fill="none"><path d="M398.5 631.5 H438.5 M418.5 611.5 V651.5"/><circle cx="418.5" cy="631.5" r="5.2"/></g><defs><radialGradient id="ring" cx="0.5" cy="0.5" r="0.5"><stop offset="0.74" stop-color="#5a6a78" stop-opacity="0"/><stop offset="0.82" stop-color="#5a6a7a" stop-opacity="0.7"/><stop offset="0.9" stop-color="#6f7e8c"/><stop offset="0.97" stop-color="#5f6e7c"/><stop offset="1" stop-color="#5f6e7c" stop-opacity="0"/></radialGradient></defs><circle cx="870" cy="612" r="40" fill="url(#ring)"/><path d="M1.3 2.6 L1.3 22.6 L6.3 17.9 L10.7 27.9 L14.5 26.2 L10.3 16.7 L15.7 16.5 Z" transform="translate(869.3,611)" fill="#fff" stroke="#fff" stroke-width="3.4" stroke-linejoin="round"/><path d="M1.3 2.6 L1.3 22.6 L6.3 17.9 L10.7 27.9 L14.5 26.2 L10.3 16.7 L15.7 16.5 Z" transform="translate(869.3,611)" fill="#fff" stroke="#000" stroke-width="1.2" stroke-linejoin="miter"/></svg><div class="a" style="left:1118px;top:155px;width:15px;height:577px;background:linear-gradient(90deg,#fbfbfb,#f4f4f4)"></div><div class="a" style="left:1123px;top:304px;width:8px;height:278px;background:#808080;border-radius:4px"></div><div class="a" style="left:95px;top:732px;width:969px;height:16px;background:#f9f9f9"></div><div class="a" style="left:161px;top:737px;width:836px;height:8px;background:#808080;border-radius:4px"></div><div class="a" style="left:1064px;top:732px;width:70px;height:16px;background:#e9e9e9"></div><svg class="a" style="left:0;top:0" width="1500" height="844"><text x="1081.26" y="744.70" font-size="13.20" fill="#1a1a1a" letter-spacing="0.000" >10 &lt; 100</text></svg><div class="a" style="left:72px;top:748px;width:1062px;height:1px;background:#b9b9b9"></div><div class="a" style="left:72px;top:749px;width:1062px;height:21px;background:#fff"></div><div class="a" style="left:72px;top:770px;width:1062px;height:1px;background:#bdbdbd"></div><div class="a" style="left:72px;top:771px;width:1062px;height:27px;background:#ececec"></div><div class="a" style="left:72px;top:797px;width:1062px;height:1px;background:#c4c4c4"></div><svg class="a" style="left:0;top:0" width="1500" height="844"><text x="76.5" y="762.2" font-size="13.2" fill="#1515d8"><tspan font-style="italic">Kommando:</tspan> line</text></svg><svg class="a" style="left:0;top:0" width="1500" height="844"><text x="73.40" y="789.50" font-size="13.10" fill="#111" letter-spacing="0.000" >Kommando:</text></svg><div class="a" style="left:148px;top:776px;width:959px;height:18px;background:#fff"></div><div class="a" style="left:1107px;top:772px;width:26px;height:26px;border:1px solid #b4b4b4;background:linear-gradient(#f0f0f0,#e8e8e8)"></div><svg class="a" style="left:1112px;top:779px" width="16" height="12" viewBox="0 0 16 12" ><rect x="1" y="1" width="14" height="10" fill="#f0f0f0" stroke="#333" stroke-width="1"/><rect x="1" y="1" width="14" height="3" fill="#111"/><rect x="12" y="2" width="1" height="1" fill="#fff"/></svg><div class="a" style="left:0;top:798px;width:1500px;height:46px;background:#dbdbdb"></div><svg class="a" style="left:0;top:0" width="1500" height="844"><text x="2.30" y="816.00" font-size="9.30" fill="#1e1e1e" letter-spacing="0.603" >239.9625,10.4983</text></svg><svg class="a" style="left:0;top:0" width="1500" height="844"><text x="2.30" y="836.00" font-size="9.30" fill="#1e1e1e" letter-spacing="0.503" >@239.9625,10.4983</text></svg><div class="a" style="left:253px;top:802px;width:1px;height:40px;background:#8a8a8a"></div><div class="a" style="left:254px;top:802px;width:1px;height:40px;background:#f4f4f4"></div><svg class="a" style="left:0;top:0" width="1500" height="844"><text x="256.20" y="816.00" font-size="9.30" fill="#1e1e1e" letter-spacing="0.370" >240.1921&lt;3°</text></svg><svg class="a" style="left:0;top:0" width="1500" height="844"><text x="256.20" y="836.00" font-size="9.30" fill="#1e1e1e" letter-spacing="0.246" >@240.1921&lt;3°</text></svg><div class="a" style="left:506.5px;top:818.7px;width:6px;height:6px;border-radius:3px;background:#c6c6c6"></div><svg class="a" style="left:0;top:0" width="1500" height="844"><text x="549.90" y="820.00" font-size="9.50" fill="#1e1e1e" letter-spacing="0.305" >Element oder Bereich selektieren</text></svg><svg class="a" style="left:0;top:0" width="1500" height="844"><text x="513.50" y="831.00" font-size="9.50" fill="#1e1e1e" letter-spacing="0.297" >Element oder Referenzpunkt verschieben</text></svg><svg class="a" style="left:717px;top:805px" width="20" height="32" viewBox="0 0 20 32" ><rect x="1.3" y="1" width="17.4" height="30" rx="8.7" fill="#fff" stroke="#555" stroke-width="0.9"/><path d="M1.3 15 Q10 12.2 18.7 15" fill="none" stroke="#444" stroke-width="1.4"/><rect x="8.4" y="4" width="3.2" height="7" rx="1.6" fill="#fff" stroke="#444" stroke-width="0.9"/><path d="M10 1 V4 M10 11 V13.5" stroke="#444" stroke-width="1.1"/></svg><div class="a" style="left:940.3px;top:818.6px;width:6px;height:6px;border-radius:3px;background:#c6c6c6"></div><svg class="a" style="left:0;top:0" width="1500" height="844"><text x="949.30" y="820.00" font-size="9.50" fill="#1e1e1e" letter-spacing="0.372" >Selektierte Objekte:</text></svg><svg class="a" style="left:0;top:0" width="1500" height="844"><text x="949.30" y="831.00" font-size="9.50" fill="#1e1e1e" letter-spacing="0.369" >149 Objekte auf Layer &quot;0&quot;.</text></svg><div class="a" style="left:1269.5px;top:819px;width:6px;height:6px;border-radius:3px;background:#c6c6c6"></div><div class="a" style="left:1134px;top:108px;width:10px;height:690px;background:#ececec"></div><div class="a" style="left:1144px;top:108px;width:11px;height:689px;background:#e3e3e3;border-radius:0 0 3px 0"></div><div class="a" style="left:1135px;top:340px;width:20px;height:144px;background:#1f82f6;border-radius:5px 0 0 5px"></div><div class="a" style="left:1135px;top:488px;width:20px;height:81px;background:#d3d3d3;border-radius:5px 0 0 5px"></div><svg class="a" style="left:0;top:0" width="1500" height="844"><text transform="translate(1149.5,412.00) rotate(-90)" x="-59.67" y="0" font-size="13.50" fill="#fff">Eigenschafteneditor</text></svg><svg class="a" style="left:0;top:0" width="1500" height="844"><text transform="translate(1149.5,528.70) rotate(-90)" x="-28.46" y="0" font-size="13.30" fill="#2a2a2a">Layerliste</text></svg><div class="a" style="left:1155px;top:108px;width:300px;height:690px;background:#ececec;border-left:1px solid #c9c9c9;border-right:1px solid #d0d0d0;border-bottom:1px solid #c9c9c9"></div><div class="a" style="left:1156px;top:108px;width:298px;height:23px;background:linear-gradient(#ececec,#dadada);border-bottom:1px solid #c2c2c2"></div><svg class="a" style="left:1156px;top:110px" width="36" height="16" viewBox="0 0 36 16" ><circle cx="8" cy="8" r="7" fill="#6a6a6a"/><path d="M5 5 L11 11 M11 5 L5 11" stroke="#eee" stroke-width="1.8"/><circle cx="26" cy="8" r="7" fill="#6a6a6a"/><rect x="21.5" y="8" width="6" height="4.5" fill="none" stroke="#eee" stroke-width="1.1"/><path d="M24 7.5 V5.5 H30 V10 H28" fill="none" stroke="#eee" stroke-width="1.1"/></svg><svg class="a" style="left:0;top:0" width="1500" height="844"><text x="1269.60" y="122.70" font-size="11.88" fill="#2a2a2a" letter-spacing="0.000" >Eigenschafteneditor</text></svg><svg class="a" style="left:0;top:0" width="1500" height="844"><text x="1169.00" y="158.60" font-size="12.81" fill="#111" letter-spacing="0.000" >Auswahl:</text></svg><div class="a" style="left:1230px;top:143px;width:212px;height:21.5px;background:#fff;border:1px solid #cfcfcf;border-radius:5px;box-shadow:0 0.5px 0.5px rgba(0,0,0,0.08)"></div><svg class="a" style="left:1423px;top:145.5px" width="16" height="16.5" viewBox="0 0 16 16.5" ><rect x="0" y="0" width="16" height="16.5" rx="4" fill="#1a7cf6"/><path d="M5 7.0 L8 4.5 L11 7.0 M5 10.6 L8 13.1 L11 10.6" fill="none" stroke="#fff" stroke-width="1.4"/></svg><svg class="a" style="left:0;top:0" width="1500" height="844"><text x="1234.40" y="159.00" font-size="12.99" fill="#111" letter-spacing="0.000" >Alle (149)</text></svg><svg class="a" style="left:0;top:0" width="1500" height="844"><text x="1175.50" y="180.60" font-size="11.76" fill="#222" letter-spacing="0.000" >Allgemeine Eigenschaften</text></svg><div class="a" style="left:1168px;top:183px;width:274px;height:185px;background:#e3e3e3;border:1px solid #dcdcdc;border-radius:5px"></div><svg class="a" style="left:0;top:0" width="1500" height="844"><text x="1260.60" y="211.00" font-size="12.73" fill="#111" letter-spacing="0.000" >Layer:</text></svg><div class="a" style="left:1299.5px;top:195px;width:105px;height:21.5px;background:#fff;border:1px solid #cfcfcf;border-radius:5px;box-shadow:0 0.5px 0.5px rgba(0,0,0,0.08)"></div><svg class="a" style="left:1385.5px;top:197.5px" width="16" height="16.5" viewBox="0 0 16 16.5" ><rect x="0" y="0" width="16" height="16.5" rx="4" fill="#1a7cf6"/><path d="M5 7.0 L8 4.5 L11 7.0 M5 10.6 L8 13.1 L11 10.6" fill="none" stroke="#fff" stroke-width="1.4"/></svg><svg class="a" style="left:1302px;top:201px" width="18" height="10" viewBox="0 0 18 10" ><rect x="0.5" y="0.5" width="16" height="9" fill="#fff" stroke="#222" stroke-width="1"/></svg><svg class="a" style="left:0;top:0" width="1500" height="844"><text x="1325.00" y="211.00" font-size="13.00" fill="#111" letter-spacing="0.000" >0</text></svg><div class="a" style="left:1407px;top:193px;width:26px;height:25.5px;border:1px solid #b0b0b0;background:#ececec"></div><svg class="a" style="left:1413px;top:199px" width="14" height="13" viewBox="0 0 14 13" ><path d="M1 2 H13 M1 6.5 H13 M1 11 H13" stroke="#666" stroke-width="1.5"/></svg><svg class="a" style="left:0;top:0" width="1500" height="844"><text x="1259.60" y="236.60" font-size="12.73" fill="#111" letter-spacing="0.000" >Farbe:</text></svg><div class="a" style="left:1299.5px;top:221px;width:133px;height:21.5px;background:#fff;border:1px solid #cfcfcf;border-radius:5px;box-shadow:0 0.5px 0.5px rgba(0,0,0,0.08)"></div><svg class="a" style="left:1413.5px;top:223.5px" width="16" height="16.5" viewBox="0 0 16 16.5" ><rect x="0" y="0" width="16" height="16.5" rx="4" fill="#1a7cf6"/><path d="M5 7.0 L8 4.5 L11 7.0 M5 10.6 L8 13.1 L11 10.6" fill="none" stroke="#fff" stroke-width="1.4"/></svg><svg class="a" style="left:1302px;top:227px" width="18" height="10" viewBox="0 0 18 10" ><rect x="0.5" y="0.5" width="16" height="9" fill="#fff" stroke="#222" stroke-width="1"/></svg><svg class="a" style="left:0;top:0" width="1500" height="844"><text x="1325.40" y="236.60" font-size="12.93" fill="#111" letter-spacing="0.000" >Von Layer</text></svg><svg class="a" style="left:0;top:0" width="1500" height="844"><text x="1224.00" y="260.60" font-size="13.28" fill="#111" letter-spacing="0.000" >Linienbreite:</text></svg><div class="a" style="left:1299.5px;top:245px;width:133px;height:21.5px;background:#fff;border:1px solid #cfcfcf;border-radius:5px;box-shadow:0 0.5px 0.5px rgba(0,0,0,0.08)"></div><svg class="a" style="left:1413.5px;top:247.5px" width="16" height="16.5" viewBox="0 0 16 16.5" ><rect x="0" y="0" width="16" height="16.5" rx="4" fill="#1a7cf6"/><path d="M5 7.0 L8 4.5 L11 7.0 M5 10.6 L8 13.1 L11 10.6" fill="none" stroke="#fff" stroke-width="1.4"/></svg><svg class="a" style="left:1302px;top:255px" width="18" height="2" viewBox="0 0 18 2" ><rect x="1" y="0" width="15" height="1" fill="#222"/></svg><svg class="a" style="left:0;top:0" width="1500" height="844"><text x="1325.40" y="260.60" font-size="12.93" fill="#111" letter-spacing="0.000" >Von Layer</text></svg><svg class="a" style="left:0;top:0" width="1500" height="844"><text x="1239.00" y="283.40" font-size="13.41" fill="#111" letter-spacing="0.000" >Linientyp:</text></svg><div class="a" style="left:1299.5px;top:269px;width:133px;height:21.5px;background:#fff;border:1px solid #cfcfcf;border-radius:5px;box-shadow:0 0.5px 0.5px rgba(0,0,0,0.08)"></div><svg class="a" style="left:1413.5px;top:271.5px" width="16" height="16.5" viewBox="0 0 16 16.5" ><rect x="0" y="0" width="16" height="16.5" rx="4" fill="#1a7cf6"/><path d="M5 7.0 L8 4.5 L11 7.0 M5 10.6 L8 13.1 L11 10.6" fill="none" stroke="#fff" stroke-width="1.4"/></svg><svg class="a" style="left:0;top:0" width="1500" height="844"><text x="1303.00" y="283.40" font-size="13.02" fill="#111" letter-spacing="0.000" >Von Layer</text></svg><svg class="a" style="left:0;top:0" width="1500" height="844"><text x="1177.60" y="309.00" font-size="13.44" fill="#111" letter-spacing="0.000" >Linientypskalierung:</text></svg><div class="a" style="left:1299.5px;top:294px;width:133px;height:19.5px;background:#fff;border-top:1px solid #d8d8d8;border-bottom:1px solid #c8c8c8;border-left:1px solid #e2e2e2;border-right:1px solid #e2e2e2"></div><svg class="a" style="left:0;top:0" width="1500" height="844"><text x="1301.50" y="309.00" font-size="13.00" fill="#111" letter-spacing="0.000" >1</text></svg><svg class="a" style="left:0;top:0" width="1500" height="844"><text x="1223.60" y="331.60" font-size="12.98" fill="#111" letter-spacing="0.000" >Reihenfolge:</text></svg><div class="a" style="left:1299.5px;top:317px;width:133px;height:19.5px;background:#fff;border-top:1px solid #d8d8d8;border-bottom:1px solid #c8c8c8;border-left:1px solid #e2e2e2;border-right:1px solid #e2e2e2"></div><svg class="a" style="left:0;top:0" width="1500" height="844"><text x="1301.40" y="331.60" font-size="12.38" fill="#111" letter-spacing="0.000" >*VARIIERT*</text></svg><svg class="a" style="left:0;top:0" width="1500" height="844"><text x="1251.60" y="354.20" font-size="12.99" fill="#111" letter-spacing="0.000" >Handle:</text></svg><div class="a" style="left:1299.5px;top:340px;width:133px;height:19.5px;background:#fff;border-top:1px solid #d8d8d8;border-bottom:1px solid #c8c8c8;border-left:1px solid #e2e2e2;border-right:1px solid #e2e2e2"></div><svg class="a" style="left:0;top:0" width="1500" height="844"><text x="1301.40" y="354.20" font-size="12.38" fill="#b8b8b8" letter-spacing="0.000" >*VARIIERT*</text></svg><svg class="a" style="left:0;top:0" width="1500" height="844"><text x="1175.40" y="384.60" font-size="11.85" fill="#222" letter-spacing="0.000" >Spezifische Eigenschaften</text></svg><div class="a" style="left:1168px;top:387.5px;width:274px;height:18px;background:#e3e3e3;border:1px solid #dcdcdc;border-radius:5px"></div><svg class="a" style="left:0;top:0" width="1500" height="844"><text x="1175.40" y="421.40" font-size="12.04" fill="#222" letter-spacing="0.000" >Benutzerdefiniert</text></svg><div class="a" style="left:1168px;top:424.5px;width:274px;height:52px;background:#e3e3e3;border:1px solid #dcdcdc;border-radius:5px"></div><div class="a" style="left:1405px;top:440px;width:22px;height:22px;border:1px solid #acacac;background:#f3f3f3"></div><svg class="a" style="left:1409px;top:444px" width="14" height="14" viewBox="0 0 14 14" ><path d="M7 2.5 V11.5 M2.5 7 H11.5" stroke="#d00000" stroke-width="2.2"/></svg><div class="a" style="left:1455px;top:108px;width:45px;height:690px;background:linear-gradient(90deg,#e6e6e6 0%,#e0e0e0 40%,#cdcdcd 85%,#c2c2c2 100%)"></div><svg class="a" style="left:1462px;top:116px" width="28" height="2" viewBox="0 0 28 2" ><rect x="0" y="0" width="2" height="2" fill="#a8a8a8"/><rect x="6" y="0" width="2" height="2" fill="#a8a8a8"/><rect x="12" y="0" width="2" height="2" fill="#a8a8a8"/><rect x="18" y="0" width="2" height="2" fill="#a8a8a8"/><rect x="24" y="0" width="2" height="2" fill="#a8a8a8"/></svg><div class="a" style="left:1456px;top:120px;width:43px;height:43px;background:#b4b4b4;border-radius:5px"></div><div class="a" style="left:1456px;top:269px;width:43px;height:42px;background:#b4b4b4;border-radius:5px"></div><div class="a" style="left:1456px;top:418.5px;width:43px;height:41.5px;background:#b4b4b4;border-radius:5px"></div><svg class="a" style="left:1458px;top:261px" width="40" height="1" viewBox="0 0 40 1" ><rect x="0" y="0" width="40" height="1" fill="url(#dd)"/><defs><pattern id="dd" width="3" height="1" patternUnits="userSpaceOnUse"><rect width="1" height="1" fill="#888"/></pattern></defs></svg><svg class="a" style="left:1458px;top:411px" width="40" height="1" viewBox="0 0 40 1" ><rect x="0" y="0" width="40" height="1" fill="url(#dd2)"/><defs><pattern id="dd2" width="3" height="1" patternUnits="userSpaceOnUse"><rect width="1" height="1" fill="#888"/></pattern></defs></svg><svg class="a" style="left:1463px;top:127px" width="29" height="29" viewBox="0 0 29 29" ><rect x="0.5" y="0.5" width="27.2" height="27.2" fill="#fff" stroke="#333" stroke-width="0.9"/><rect x="0.5" y="0.5" width="27.2" height="4.6" fill="#000"/><rect x="1.6" y="1.4" width="3.2" height="3" fill="#fff"/><path d="M6 11 L13 9 L13 21 L6 23 Z" fill="#c8c8c8" stroke="#444" stroke-width="0.8"/><path d="M10 10 L22 7 L22 19 L10 22 Z" fill="#e8e8e8" stroke="#555" stroke-width="0.8"/><path d="M14 18 L18 11 L19 18 Z" fill="none" stroke="#e03030" stroke-width="0.9"/></svg><svg class="a" style="left:1463px;top:174px" width="29" height="29" viewBox="0 0 29 29" ><rect x="0.5" y="0.5" width="27.2" height="27.2" fill="#fff" stroke="#333" stroke-width="0.9"/><rect x="0.5" y="0.5" width="27.2" height="4.6" fill="#000"/><rect x="1.6" y="1.4" width="3.2" height="3" fill="#fff"/><rect x="7" y="10" width="11" height="8" fill="#fdf1c4" stroke="#555" stroke-width="0.8"/><circle cx="17" cy="18" r="5" fill="#fdf0c0" stroke="#555" stroke-width="0.8"/></svg><svg class="a" style="left:1463px;top:220px" width="29" height="29" viewBox="0 0 29 29" ><rect x="0.5" y="0.5" width="27.2" height="27.2" fill="#fff" stroke="#333" stroke-width="0.9"/><rect x="0.5" y="0.5" width="27.2" height="4.6" fill="#000"/><rect x="1.6" y="1.4" width="3.2" height="3" fill="#fff"/><rect x="6" y="11" width="17" height="12" rx="2" fill="#f4f4f4" stroke="#b8c8e0" stroke-width="0.8"/></svg><svg class="a" style="left:1463px;top:276px" width="29" height="29" viewBox="0 0 29 29" ><rect x="0.5" y="0.5" width="27.2" height="27.2" fill="#fff" stroke="#333" stroke-width="0.9"/><rect x="0.5" y="0.5" width="27.2" height="4.6" fill="#000"/><rect x="1.6" y="1.4" width="3.2" height="3" fill="#fff"/><rect x="4" y="9" width="5" height="4" fill="#111"/><rect x="4" y="15" width="5" height="4" fill="#111"/><rect x="4" y="21" width="5" height="4" fill="#111"/><rect x="11" y="9.5" width="14" height="3" fill="#fff" stroke="#333" stroke-width="0.8"/><rect x="11" y="15.5" width="14" height="3" fill="#fff" stroke="#333" stroke-width="0.8"/><rect x="11" y="21.5" width="14" height="3" fill="#fff" stroke="#333" stroke-width="0.8"/></svg><svg class="a" style="left:1463px;top:323px" width="29" height="29" viewBox="0 0 29 29" ><rect x="0.5" y="0.5" width="27.2" height="27.2" fill="#fff" stroke="#333" stroke-width="0.9"/><rect x="0.5" y="0.5" width="27.2" height="4.6" fill="#000"/><rect x="1.6" y="1.4" width="3.2" height="3" fill="#fff"/><path d="M6 10 L22 10 L16 17 L16 24 L12 22 L12 17 Z" fill="#d0d0d0" stroke="#555" stroke-width="0.8"/></svg><svg class="a" style="left:1463px;top:369.5px" width="29" height="29" viewBox="0 0 29 29" ><rect x="0.5" y="0.5" width="27.2" height="27.2" fill="#fff" stroke="#333" stroke-width="0.9"/><rect x="0.5" y="0.5" width="27.2" height="4.6" fill="#000"/><rect x="1.6" y="1.4" width="3.2" height="3" fill="#fff"/><path d="M6 10 L11 14 L20 14 L20 22 L11 22 L6 26 Z" fill="#e8e8e8" stroke="#444" stroke-width="0.8"/><rect x="13" y="14" width="8" height="8" fill="#888"/><path d="M3 18 H26" stroke="#f08080" stroke-width="0.8" stroke-dasharray="1.5 1"/></svg><svg class="a" style="left:1463px;top:425.5px" width="29" height="29" viewBox="0 0 29 29" ><rect x="0.5" y="0.5" width="27.2" height="27.2" fill="#fff" stroke="#333" stroke-width="0.9"/><rect x="0.5" y="0.5" width="27.2" height="4.6" fill="#000"/><rect x="1.6" y="1.4" width="3.2" height="3" fill="#fff"/><path d="M4 9 H20 M4 12 H18 M4 15 H21 M4 18 H20 M4 25 H25" stroke="#999" stroke-width="0.8"/><rect x="2" y="23" width="25" height="4" fill="none" stroke="#333" stroke-width="0.7"/></svg><svg class="a" style="left:1463px;top:472px" width="29" height="29" viewBox="0 0 29 29" ><rect x="0.5" y="0.5" width="27.2" height="27.2" fill="#fff" stroke="#333" stroke-width="0.9"/><rect x="0.5" y="0.5" width="27.2" height="4.6" fill="#000"/><rect x="1.6" y="1.4" width="3.2" height="3" fill="#fff"/><rect x="7" y="9" width="15" height="17" rx="1" fill="#c89040" stroke="#8a5a18" stroke-width="0.8"/><rect x="9" y="11" width="11" height="13" fill="#f0f0f0"/><rect x="11" y="7" width="7" height="3" fill="#999"/></svg></body></html>
